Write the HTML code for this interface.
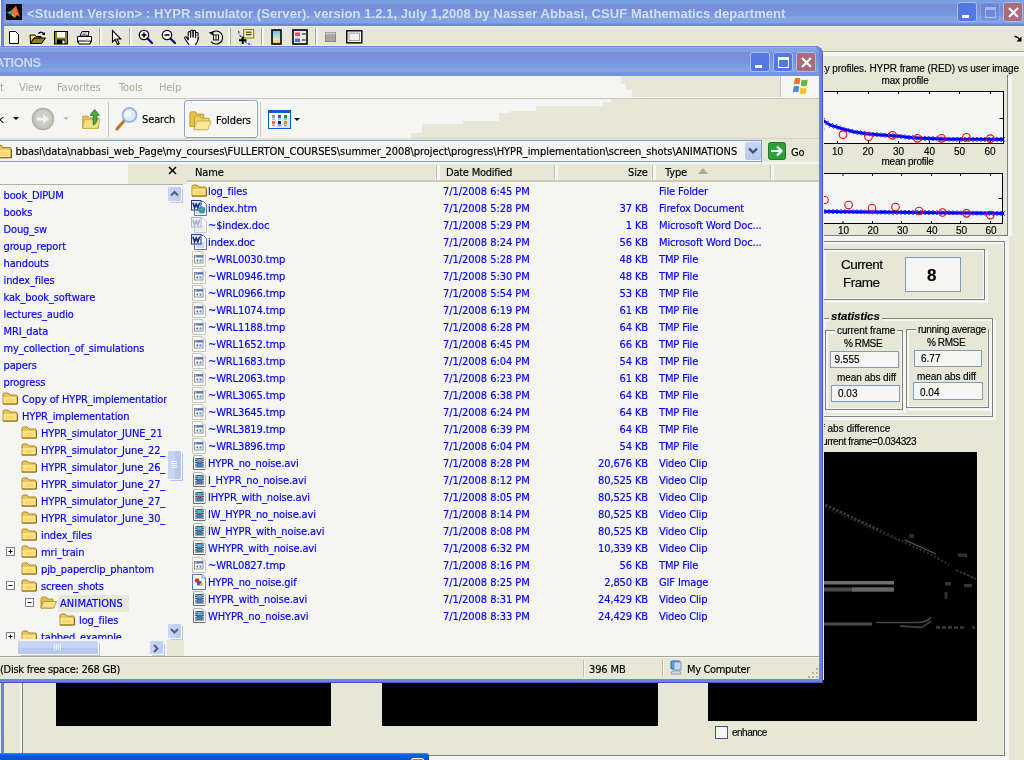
<!DOCTYPE html><html><head><meta charset="utf-8"><title>screenshot</title><style>
*{box-sizing:border-box}
html,body{margin:0;padding:0;width:1024px;height:760px;overflow:hidden;background:#E7E7D8}
body{position:relative;font-family:'DejaVu Sans Condensed','Liberation Sans',sans-serif;font-size:11px;color:#000}
#root{position:absolute;left:0;top:0;width:1024px;height:760px;overflow:hidden;will-change:transform}
.a{position:absolute}
.t{position:absolute;white-space:nowrap;line-height:14px;height:14px;letter-spacing:-0.12px}
.ar{letter-spacing:0}
.ar{font-family:'Liberation Sans',sans-serif}
svg{position:absolute;overflow:visible}
.blue{color:#0000FF}
.t{-webkit-text-stroke:0.16px currentColor}
</style></head><body><div id="root"><div class="a" style="left:0px;top:0px;width:1024px;height:26px;background:linear-gradient(#79A0E0 0,#79A0E0 3.5px,#7890DA 4px,#7890DA 11px,#7696E0 12px,#7696E0 15.5px,#82A3E2 16.5px,#82A3E2 23px,#6E86D8 24px,#6E86D8 26px)"></div>
<div class="a" style="left:4px;top:26px;width:1020px;height:1px;background:#EEEBD8"></div>
<div class="a" style="left:0px;top:0px;width:1px;height:683px;background:#F5F5F3"></div>
<div class="a" style="left:0px;top:730px;width:1px;height:30px;background:#E4ECFA"></div>
<div class="a" style="left:1px;top:0px;width:3px;height:760px;background:#7082D6"></div>
<svg style="left:6px;top:4px" width="16" height="16" viewBox="0 0 16 16"><rect width="16" height="16" fill="#0a0a0a"/><path d="M1 8.5 L5 6.5 L7.5 9.5 L5 10.5 Z" fill="#3FA7C8"/><path d="M5 6.5 L8 4 L10 1.5 L11.5 6 L14 13 L11 11 L9 14 L7.5 9.5 Z" fill="#E8742A"/><path d="M10 1.5 L11.5 6 L14 13 L12 10 Z" fill="#B8321E"/><path d="M7.5 9.5 L9 14 L6.5 12 L5 10.5Z" fill="#F2B340"/></svg>
<div class="t " style="left:27px;top:6px;font:bold 13px/16px 'Liberation Sans',sans-serif;height:16px;color:#D4DFF6;letter-spacing:0.065px;-webkit-text-stroke:0">&lt;Student Version&gt; : HYPR simulator (Server). version 1.2.1, July 1,2008 by Nasser Abbasi, CSUF Mathematics department</div>
<div class="a" style="left:957px;top:2px;width:20px;height:20px;background:#5378E0;border:1px solid #A9BDEE;border-radius:3px"><div class="a" style="left:4px;top:12px;width:7px;height:3px;background:#fff"></div></div>
<div class="a" style="left:980px;top:2px;width:20px;height:20px;opacity:.35;background:#5378E0;border:1px solid #A9BDEE;border-radius:3px"><div class="a" style="left:4px;top:4px;width:11px;height:11px;border:1px solid #fff;border-top:3px solid #fff"></div></div>
<div class="a" style="left:1003px;top:2px;width:20px;height:20px;background:#AD6A7A;border:1px solid #A9BDEE;border-radius:3px"><svg style="left:0;top:0" width="19" height="19" viewBox="0 0 19 19"><path d="M5 5 L14 14 M14 5 L5 14" stroke="#fff" stroke-width="2.2" /></svg></div>
<div class="a" style="left:4px;top:27px;width:1020px;height:19px;background:#E7E7D8"></div>
<svg style="left:8px;top:30px" width="12" height="15" viewBox="0 0 12 15"><path d="M1.5 1.5 H7.5 L10.5 4.5 V13.5 H1.5 Z" fill="#fff" stroke="#000" stroke-width="1"/></svg>
<svg style="left:29px;top:30px" width="18" height="14" viewBox="0 0 18 14"><path d="M9 3 q3 -3 6 0 l1 -1 v3 h-3 l1 -1 q-2 -2 -4 0z" fill="#000"/><path d="M1 5 H6 L7 6.5 H12 V8 H5 L1.5 13 Z" fill="#F4E04A" stroke="#000" stroke-width="1"/><path d="M5 8 H16.5 L12.5 13.5 H1.5 Z" fill="#8A8418" stroke="#000" stroke-width="1"/></svg>
<svg style="left:54px;top:31px" width="14" height="14" viewBox="0 0 14 14"><rect x="0.5" y="0.5" width="13" height="12.5" fill="#8A8418" stroke="#000"/><rect x="3" y="1" width="8" height="5.5" fill="#fff"/><rect x="3" y="8.5" width="8" height="4.5" fill="#000"/><rect x="8.5" y="9.5" width="2" height="3" fill="#fff"/></svg>
<svg style="left:76px;top:30px" width="17" height="15" viewBox="0 0 17 15"><path d="M4 6 L6 1.5 H13 L12 6Z" fill="#fff" stroke="#000"/><path d="M1.5 6.500 H15.5 V12 H1.5Z" fill="#fff" stroke="#000"/><path d="M2 11 H15 L14 14 H3Z" fill="#fff" stroke="#000"/><rect x="9" y="9" width="4" height="1.5" fill="#F4E04A"/><path d="M6.5 3 H11 M6 4.500 H10.5" stroke="#666" stroke-width=".8"/></svg>
<div class="a" style="left:99px;top:28px;width:1px;height:18px;background:#A8A898"></div>
<div class="a" style="left:100px;top:28px;width:2px;height:18px;background:#F5F5F3"></div>
<div class="a" style="left:129px;top:28px;width:1px;height:18px;background:#A8A898"></div>
<div class="a" style="left:130px;top:28px;width:2px;height:18px;background:#F5F5F3"></div>
<svg style="left:111px;top:30px" width="10" height="16" viewBox="0 0 10 16"><path d="M1.5 0.500 V12 L4.200 9.500 L6.500 14.500 L8.200 13.700 L6 9 H9.800 Z" fill="#fff" stroke="#000" stroke-width="1.1"/></svg>
<svg style="left:138px;top:29px" width="16" height="16" viewBox="0 0 16 16"><circle cx="6" cy="6" r="4.700" fill="#fff" stroke="#000" stroke-width="1.3"/><path d="M3.500 6 H8.500" stroke="#000" stroke-width="1.6"/><path d="M6 3.500 V8.500" stroke="#000" stroke-width="1.6"/><path d="M9.500 9.500 L14 14" stroke="#10108C" stroke-width="2.400" stroke-linecap="round"/></svg>
<svg style="left:161px;top:29px" width="16" height="16" viewBox="0 0 16 16"><circle cx="6" cy="6" r="4.700" fill="#fff" stroke="#000" stroke-width="1.3"/><path d="M3.500 6 H8.500" stroke="#000" stroke-width="1.6"/><path d="M9.500 9.500 L14 14" stroke="#10108C" stroke-width="2.400" stroke-linecap="round"/></svg>
<svg style="left:184px;top:29px" width="17" height="17" viewBox="0 0 17 17"><g fill="#fff" stroke="#000" stroke-width="1.100"><rect x="4.200" y="2.500" width="2.300" height="8" rx="1.100"/><rect x="6.700" y="1" width="2.300" height="9" rx="1.100"/><rect x="9.200" y="1.300" width="2.300" height="9" rx="1.100"/><rect x="11.700" y="3.300" width="2.300" height="8" rx="1.100"/></g><path d="M4.200 7.500 V11.300 L2.700 8.500 Q1.700 7.300 0.900 8.200 Q0.400 9 1.200 10.200 L5.300 16.200 H11.200 Q14 12.500 14 10.300 V7.500Z" fill="#fff"/><path d="M4.200 8 V11.300 L2.700 8.500 Q1.700 7.300 0.900 8.200 Q0.400 9 1.200 10.200 L5.300 16.200 M11.200 16.200 Q14 12.500 14 10.300 V8" fill="none" stroke="#000" stroke-width="1.100"/><path d="M6.600 7 V9 M9.100 7 V9 M11.600 7 V9" stroke="#000" stroke-width=".9"/></svg>
<svg style="left:208px;top:29px" width="17" height="17" viewBox="0 0 17 17"><path d="M3.500 4 A6.500 6.500 0 1 1 3 12.500" fill="none" stroke="#000" stroke-width="1.100"/><path d="M1 3 H5.500 V7.500 Z" fill="#000" transform="rotate(-10 3 5)"/><rect x="5.500" y="6" width="5" height="5" fill="#fff" stroke="#000" stroke-width=".9"/><path d="M8 6 V11" stroke="#000" stroke-width=".9"/></svg>
<div class="a" style="left:230px;top:28px;width:1px;height:18px;background:#A8A898"></div>
<div class="a" style="left:228px;top:28px;width:2px;height:18px;background:#F5F5F3"></div>
<svg style="left:238px;top:28px" width="18" height="18" viewBox="0 0 18 18"><path d="M0.500 3 Q3 14 14 17" fill="none" stroke="#2020E0" stroke-width="1.100" stroke-dasharray="2.500 1.500"/><rect x="5.700" y="1.500" width="10" height="8.500" fill="#F4EEB8" stroke="#8A8418" stroke-width="1.100"/><path d="M8 4.200 H13.500 M8 6.700 H13.500" stroke="#000" stroke-width=".9"/><path d="M1 12.300 H8.500 M4.700 8.500 V16" stroke="#000" stroke-width="2"/></svg>
<div class="a" style="left:261px;top:28px;width:1px;height:18px;background:#A8A898"></div>
<div class="a" style="left:262px;top:28px;width:2px;height:18px;background:#F5F5F3"></div>
<svg style="left:271px;top:29px" width="11" height="17" viewBox="0 0 11 17"><defs><linearGradient id="cb" x1="0" y1="0" x2="0" y2="1"><stop offset="0" stop-color="#7FB4F0"/><stop offset=".45" stop-color="#A8E0E0"/><stop offset=".7" stop-color="#F2E6A0"/><stop offset="1" stop-color="#F0B080"/></linearGradient></defs><rect x="1" y="1" width="9" height="14" fill="url(#cb)" stroke="#000" stroke-width="1.600"/></svg>
<svg style="left:292px;top:29px" width="16" height="16" viewBox="0 0 16 16"><rect x="1" y="1" width="14" height="14" fill="#E8E8E0" stroke="#000" stroke-width="1.600"/><rect x="3" y="3.500" width="5" height="3.500" fill="#E05060"/><rect x="3" y="9.500" width="5" height="3.500" fill="#5070E0"/><path d="M10 5 H13.500 M10 11 H13.500" stroke="#000" stroke-width="1.200"/></svg>
<div class="a" style="left:315px;top:28px;width:1px;height:18px;background:#A8A898"></div>
<div class="a" style="left:316px;top:28px;width:2px;height:18px;background:#F5F5F3"></div>
<svg style="left:325px;top:32px" width="12" height="11" viewBox="0 0 12 11"><rect x="0.500" y="0.500" width="10" height="9" fill="#A8A8A0" stroke="#888880"/><rect x="0.500" y="0.500" width="10" height="2" fill="#C8C8C0"/></svg>
<svg style="left:346px;top:30px" width="17" height="14" viewBox="0 0 17 14"><rect x="0.800" y="0.800" width="15" height="12" fill="#fff" stroke="#000" stroke-width="1.400"/><rect x="3" y="3" width="10.500" height="7.500" fill="#F0F0EC" stroke="#888" stroke-width=".8"/></svg>
<svg style="left:1014px;top:35px" width="8" height="7" viewBox="0 0 8 7"><path d="M0.500 1.500 Q3 1 6.500 5.500" stroke="#000" stroke-width="1.400" fill="none"/><path d="M7.500 1.500 V6.500 H2.500 Z" fill="#000"/></svg>
<div class="a" style="left:20px;top:683px;width:2px;height:72px;background:#F5F5F3"></div>
<div class="a" style="left:22px;top:683px;width:1px;height:72px;background:#808080"></div>
<div class="a" style="left:4px;top:51px;width:1020px;height:1px;background:#A8A890"></div>
<div class="a" style="left:4px;top:52px;width:1020px;height:4px;background:#F5F5F3"></div>
<div class="a" style="left:1007px;top:75px;width:1px;height:161px;background:#808080"></div>
<div class="a" style="left:1008px;top:76px;width:4px;height:160px;background:#F5F5F3"></div>
<div class="a" style="left:822px;top:235px;width:186px;height:1px;background:#808080"></div>
<div class="a" style="left:822px;top:236px;width:186px;height:5px;background:#F5F5F3"></div>
<div class="a" style="left:1005px;top:236px;width:4px;height:524px;background:#F5F5F3"></div>
<div class="a" style="left:822px;top:241px;width:183px;height:1px;background:#808080"></div>
<div class="a" style="left:822px;top:242px;width:181px;height:2px;background:#F5F5F3"></div>
<div class="a" style="left:1003px;top:242px;width:1px;height:513px;background:#F5F5F3"></div>
<div class="a" style="left:1004px;top:242px;width:1px;height:514px;background:#808080"></div>
<div class="a" style="left:429px;top:755px;width:576px;height:1px;background:#808080"></div>
<div class="a" style="left:429px;top:756px;width:580px;height:4px;background:#F5F5F3"></div>
<div class="a" style="left:56px;top:683px;width:275px;height:43px;background:#000"></div>
<div class="a" style="left:382px;top:683px;width:276px;height:43px;background:#000"></div>
<div class="a" style="left:708px;top:452px;width:269px;height:269px;background:#000"></div>
<div class="a" style="left:715px;top:726px;width:13px;height:13px;background:#F5F5F3;border:1px solid #3C5A8C"></div>
<div class="t ar" style="left:732px;top:726px;font-size:10px;letter-spacing:-0.5px">enhance</div>
<svg style="left:0;top:0" width="1024" height="760" viewBox="0 0 1024 760"><path d="M800 493 L880 530.600" stroke="#3A3A3A" stroke-width="2.600" stroke-dasharray="2.500 1.500" fill="none"/><path d="M880 530.600 L936 557 L949 565" stroke="#2C2C2C" stroke-width="2.400" stroke-dasharray="2 2" fill="none"/><path d="M806 499 L900 541" stroke="#2C2C2C" stroke-width="1.500" stroke-dasharray="1.500 2" fill="none"/><path d="M905 540 L936 554" stroke="#585858" stroke-width="1.300" fill="none"/><path d="M956 570 L976 579" stroke="#3A3A3A" stroke-width="1.600" stroke-dasharray="3 1" fill="none"/><rect x="800" y="581" width="94" height="3.500" fill="#6E6E6E"/><rect x="800" y="587.500" width="94" height="4" fill="#484848"/><rect x="852" y="587.500" width="42" height="4" fill="#666"/><rect x="800" y="622.500" width="72" height="3" fill="#4C4C4C"/><path d="M876 622.500 H918 Q928 622 931 617" stroke="#484848" stroke-width="1.500" fill="none"/><path d="M900 626 L922 627.500 L931 621" stroke="#3C3C3C" stroke-width="2" fill="none"/><path d="M936 627.500 H964" stroke="#3A3A3A" stroke-width="2.500" stroke-dasharray="4 2" fill="none"/><rect x="958" y="553.500" width="9" height="3.500" fill="#303030"/><rect x="964" y="584" width="8" height="3" fill="#383838"/><rect x="945" y="582" width="6" height="3.500" fill="#343434"/><rect x="944.500" y="592" width="3" height="7" fill="#303030"/><rect x="909" y="534" width="5" height="4" fill="#2C2C2C"/><rect x="972" y="626" width="3" height="3" fill="#303030"/></svg>
<div class="t ar" style="left:822px;top:62px;font-size:10px;letter-spacing:-0.07px">ty profiles. HYPR frame (RED) vs user image</div>
<div class="t ar" style="left:881.5px;top:74px;font-size:10px;letter-spacing:-0.17px">max profile</div>
<div class="t ar" style="left:881.5px;top:154.5px;font-size:10px;letter-spacing:-0.25px">mean profile</div>
<svg style="left:0;top:0" width="1024" height="760" viewBox="0 0 1024 760"><rect x="800" y="91.5" width="203.5" height="52" fill="#F5F5F3" stroke="#000" stroke-width="1"/><path d="M837.5 91 v3 M837.5 144 v-3" stroke="#000" stroke-width="1"/><path d="M868.5 91 v3 M868.5 144 v-3" stroke="#000" stroke-width="1"/><path d="M898.5 91 v3 M898.5 144 v-3" stroke="#000" stroke-width="1"/><path d="M929.5 91 v3 M929.5 144 v-3" stroke="#000" stroke-width="1"/><path d="M959.5 91 v3 M959.5 144 v-3" stroke="#000" stroke-width="1"/><path d="M990.5 91 v3 M990.5 144 v-3" stroke="#000" stroke-width="1"/><path d="M1003.5 118.5 h-4" stroke="#000" stroke-width="1"/><polyline points="810.0,113.32 811.0,113.85 812.0,114.38 813.0,114.91 814.0,115.45 815.0,115.98 816.0,116.51 817.0,117.04 818.0,117.57 819.0,118.10 820.0,118.64 821.0,119.17 822.0,119.70 823.0,120.36 824.0,121.03 825.0,121.69 826.0,122.35 827.0,123.01 828.0,123.67 829.0,124.34 830.0,125.00 831.0,125.31 832.0,125.62 833.0,125.92 834.0,126.23 835.0,126.54 836.0,126.85 837.0,127.15 838.0,127.46 839.0,127.77 840.0,128.08 841.0,128.38 842.0,128.69 843.0,129.00 844.0,129.26 845.0,129.53 846.0,129.79 847.0,130.05 848.0,130.32 849.0,130.58 850.0,130.85 851.0,131.11 852.0,131.37 853.0,131.64 854.0,131.90 855.0,132.04 856.0,132.19 857.0,132.33 858.0,132.47 859.0,132.61 860.0,132.76 861.0,132.90 862.0,133.04 863.0,133.19 864.0,133.33 865.0,133.47 866.0,133.61 867.0,133.76 868.0,133.90 869.0,133.98 870.0,134.06 871.0,134.15 872.0,134.23 873.0,134.31 874.0,134.39 875.0,134.47 876.0,134.55 877.0,134.64 878.0,134.72 879.0,134.80 880.0,134.87 881.0,134.94 882.0,135.01 883.0,135.08 884.0,135.15 885.0,135.22 886.0,135.29 887.0,135.36 888.0,135.43 889.0,135.50 890.0,135.57 891.0,135.64 892.0,135.71 893.0,135.78 894.0,135.85 895.0,135.92 896.0,135.99 897.0,136.06 898.0,136.13 899.0,136.20 900.0,136.32 901.0,136.44 902.0,136.57 903.0,136.69 904.0,136.81 905.0,136.93 906.0,137.06 907.0,137.18 908.0,137.30 909.0,137.38 910.0,137.45 911.0,137.53 912.0,137.60 913.0,137.68 914.0,137.75 915.0,137.82 916.0,137.90 917.0,137.97 918.0,138.05 919.0,138.12 920.0,138.20 921.0,138.23 922.0,138.27 923.0,138.30 924.0,138.34 925.0,138.37 926.0,138.41 927.0,138.44 928.0,138.48 929.0,138.51 930.0,138.54 931.0,138.58 932.0,138.61 933.0,138.65 934.0,138.68 935.0,138.72 936.0,138.75 937.0,138.79 938.0,138.82 939.0,138.86 940.0,138.89 941.0,138.92 942.0,138.96 943.0,138.99 944.0,139.03 945.0,139.06 946.0,139.10 947.0,139.13 948.0,139.17 949.0,139.20 950.0,139.20 951.0,139.21 952.0,139.21 953.0,139.21 954.0,139.22 955.0,139.22 956.0,139.23 957.0,139.23 958.0,139.23 959.0,139.24 960.0,139.24 961.0,139.24 962.0,139.25 963.0,139.25 964.0,139.25 965.0,139.26 966.0,139.26 967.0,139.27 968.0,139.27 969.0,139.27 970.0,139.28 971.0,139.28 972.0,139.28 973.0,139.29 974.0,139.29 975.0,139.29 976.0,139.30 977.0,139.30 978.0,139.31 979.0,139.31 980.0,139.31 981.0,139.32 982.0,139.32 983.0,139.32 984.0,139.33 985.0,139.33 986.0,139.33 987.0,139.34 988.0,139.34 989.0,139.35 990.0,139.35 991.0,139.35 992.0,139.36 993.0,139.36 994.0,139.36 995.0,139.37 996.0,139.37 997.0,139.37 998.0,139.38 999.0,139.38 1000.0,139.39 1001.0,139.39 1002.0,139.39 1003.0,139.40 1004.0,139.40" fill="none" stroke="#0000FF" stroke-width="2.6"/><path d="M809.5 111.6 l3 4.4 M812.5 111.6 l-3 4.4 M813.5 113.8 l3 4.4 M816.5 113.8 l-3 4.4 M817.5 115.9 l3 4.4 M820.5 115.9 l-3 4.4 M821.5 118.2 l3 4.4 M824.5 118.2 l-3 4.4 M825.5 120.8 l3 4.4 M828.5 120.8 l-3 4.4 M829.5 123.1 l3 4.4 M832.5 123.1 l-3 4.4 M833.5 124.3 l3 4.4 M836.5 124.3 l-3 4.4 M837.5 125.6 l3 4.4 M840.5 125.6 l-3 4.4 M841.5 126.8 l3 4.4 M844.5 126.8 l-3 4.4 M845.5 127.9 l3 4.4 M848.5 127.9 l-3 4.4 M849.5 128.9 l3 4.4 M852.5 128.9 l-3 4.4 M853.5 129.8 l3 4.4 M856.5 129.8 l-3 4.4 M857.5 130.4 l3 4.4 M860.5 130.4 l-3 4.4 M861.5 131.0 l3 4.4 M864.5 131.0 l-3 4.4 M865.5 131.6 l3 4.4 M868.5 131.6 l-3 4.4 M869.5 131.9 l3 4.4 M872.5 131.9 l-3 4.4 M873.5 132.3 l3 4.4 M876.5 132.3 l-3 4.4 M877.5 132.6 l3 4.4 M880.5 132.6 l-3 4.4 M881.5 132.9 l3 4.4 M884.5 132.9 l-3 4.4 M885.5 133.2 l3 4.4 M888.5 133.2 l-3 4.4 M889.5 133.4 l3 4.4 M892.5 133.4 l-3 4.4 M893.5 133.7 l3 4.4 M896.5 133.7 l-3 4.4 M897.5 134.0 l3 4.4 M900.5 134.0 l-3 4.4 M901.5 134.5 l3 4.4 M904.5 134.5 l-3 4.4 M905.5 135.0 l3 4.4 M908.5 135.0 l-3 4.4 M909.5 135.3 l3 4.4 M912.5 135.3 l-3 4.4 M913.5 135.6 l3 4.4 M916.5 135.6 l-3 4.4 M917.5 135.9 l3 4.4 M920.5 135.9 l-3 4.4 M921.5 136.1 l3 4.4 M924.5 136.1 l-3 4.4 M925.5 136.2 l3 4.4 M928.5 136.2 l-3 4.4 M929.5 136.4 l3 4.4 M932.5 136.4 l-3 4.4 M933.5 136.5 l3 4.4 M936.5 136.5 l-3 4.4 M937.5 136.7 l3 4.4 M940.5 136.7 l-3 4.4 M941.5 136.8 l3 4.4 M944.5 136.8 l-3 4.4 M945.5 136.9 l3 4.4 M948.5 136.9 l-3 4.4 M949.5 137.0 l3 4.4 M952.5 137.0 l-3 4.4 M953.5 137.0 l3 4.4 M956.5 137.0 l-3 4.4 M957.5 137.0 l3 4.4 M960.5 137.0 l-3 4.4 M961.5 137.1 l3 4.4 M964.5 137.1 l-3 4.4 M965.5 137.1 l3 4.4 M968.5 137.1 l-3 4.4 M969.5 137.1 l3 4.4 M972.5 137.1 l-3 4.4 M973.5 137.1 l3 4.4 M976.5 137.1 l-3 4.4 M977.5 137.1 l3 4.4 M980.5 137.1 l-3 4.4 M981.5 137.1 l3 4.4 M984.5 137.1 l-3 4.4 M985.5 137.1 l3 4.4 M988.5 137.1 l-3 4.4 M989.5 137.2 l3 4.4 M992.5 137.2 l-3 4.4 M993.5 137.2 l3 4.4 M996.5 137.2 l-3 4.4 M997.5 137.2 l3 4.4 M1000.5 137.2 l-3 4.4 M1001.5 137.2 l3 4.4 M1004.5 137.2 l-3 4.4 " stroke="#0000FF" stroke-width="1"/><circle cx="820" cy="129" r="3.800" fill="none" stroke="#F00000" stroke-width="1.100"/><circle cx="843" cy="134.7" r="3.800" fill="none" stroke="#F00000" stroke-width="1.100"/><circle cx="868.5" cy="136.7" r="3.800" fill="none" stroke="#F00000" stroke-width="1.100"/><circle cx="892.5" cy="135.3" r="3.800" fill="none" stroke="#F00000" stroke-width="1.100"/><circle cx="917.4" cy="138.3" r="3.800" fill="none" stroke="#F00000" stroke-width="1.100"/><circle cx="941.5" cy="138.3" r="3.800" fill="none" stroke="#F00000" stroke-width="1.100"/><circle cx="966.4" cy="137.3" r="3.800" fill="none" stroke="#F00000" stroke-width="1.100"/><circle cx="990.3" cy="138.7" r="3.800" fill="none" stroke="#F00000" stroke-width="1.100"/></svg>
<svg style="left:0;top:0" width="1024" height="760" viewBox="0 0 1024 760"><rect x="800" y="173.5" width="202.5" height="50" fill="#F5F5F3" stroke="#000" stroke-width="1"/><path d="M843 173 v3 M843 224 v-3" stroke="#000" stroke-width="1"/><path d="M872.5 173 v3 M872.5 224 v-3" stroke="#000" stroke-width="1"/><path d="M901.5 173 v3 M901.5 224 v-3" stroke="#000" stroke-width="1"/><path d="M931.5 173 v3 M931.5 224 v-3" stroke="#000" stroke-width="1"/><path d="M960.5 173 v3 M960.5 224 v-3" stroke="#000" stroke-width="1"/><path d="M990.5 173 v3 M990.5 224 v-3" stroke="#000" stroke-width="1"/><path d="M1002.5 198.5 h-4" stroke="#000" stroke-width="1"/><polyline points="822.0,211.50 823.0,211.51 824.0,211.52 825.0,211.53 826.0,211.54 827.0,211.55 828.0,211.56 829.0,211.57 830.0,211.58 831.0,211.59 832.0,211.60 833.0,211.61 834.0,211.63 835.0,211.64 836.0,211.65 837.0,211.66 838.0,211.67 839.0,211.68 840.0,211.69 841.0,211.70 842.0,211.71 843.0,211.72 844.0,211.73 845.0,211.74 846.0,211.75 847.0,211.76 848.0,211.77 849.0,211.78 850.0,211.79 851.0,211.80 852.0,211.81 853.0,211.82 854.0,211.83 855.0,211.84 856.0,211.85 857.0,211.87 858.0,211.88 859.0,211.89 860.0,211.90 861.0,211.91 862.0,211.92 863.0,211.93 864.0,211.94 865.0,211.95 866.0,211.96 867.0,211.97 868.0,211.98 869.0,211.99 870.0,212.00 871.0,212.01 872.0,212.02 873.0,212.03 874.0,212.04 875.0,212.05 876.0,212.06 877.0,212.07 878.0,212.08 879.0,212.10 880.0,212.11 881.0,212.12 882.0,212.13 883.0,212.14 884.0,212.15 885.0,212.16 886.0,212.17 887.0,212.18 888.0,212.19 889.0,212.20 890.0,212.21 891.0,212.22 892.0,212.23 893.0,212.24 894.0,212.25 895.0,212.26 896.0,212.27 897.0,212.28 898.0,212.29 899.0,212.30 900.0,212.31 901.0,212.32 902.0,212.34 903.0,212.35 904.0,212.36 905.0,212.37 906.0,212.38 907.0,212.39 908.0,212.40 909.0,212.41 910.0,212.42 911.0,212.43 912.0,212.44 913.0,212.45 914.0,212.46 915.0,212.47 916.0,212.48 917.0,212.49 918.0,212.50 919.0,212.51 920.0,212.52 921.0,212.53 922.0,212.54 923.0,212.55 924.0,212.56 925.0,212.58 926.0,212.59 927.0,212.60 928.0,212.61 929.0,212.62 930.0,212.63 931.0,212.64 932.0,212.65 933.0,212.66 934.0,212.67 935.0,212.68 936.0,212.69 937.0,212.70 938.0,212.71 939.0,212.72 940.0,212.73 941.0,212.74 942.0,212.75 943.0,212.76 944.0,212.77 945.0,212.78 946.0,212.79 947.0,212.80 948.0,212.82 949.0,212.83 950.0,212.84 951.0,212.85 952.0,212.86 953.0,212.87 954.0,212.88 955.0,212.89 956.0,212.90 957.0,212.91 958.0,212.92 959.0,212.93 960.0,212.94 961.0,212.95 962.0,212.96 963.0,212.97 964.0,212.98 965.0,212.99 966.0,213.00 967.0,213.01 968.0,213.02 969.0,213.03 970.0,213.05 971.0,213.06 972.0,213.07 973.0,213.08 974.0,213.09 975.0,213.10 976.0,213.11 977.0,213.12 978.0,213.13 979.0,213.14 980.0,213.15 981.0,213.16 982.0,213.17 983.0,213.18 984.0,213.19 985.0,213.20 986.0,213.21 987.0,213.22 988.0,213.23 989.0,213.24 990.0,213.25 991.0,213.26 992.0,213.27 993.0,213.29 994.0,213.30 995.0,213.31 996.0,213.32 997.0,213.33 998.0,213.34 999.0,213.35 1000.0,213.36 1001.0,213.37 1002.0,213.38 1003.0,213.39 1004.0,213.40" fill="none" stroke="#0000FF" stroke-width="2.6"/><path d="M821.5 209.3 l3 4.4 M824.5 209.3 l-3 4.4 M825.5 209.4 l3 4.4 M828.5 209.4 l-3 4.4 M829.5 209.4 l3 4.4 M832.5 209.4 l-3 4.4 M833.5 209.4 l3 4.4 M836.5 209.4 l-3 4.4 M837.5 209.5 l3 4.4 M840.5 209.5 l-3 4.4 M841.5 209.5 l3 4.4 M844.5 209.5 l-3 4.4 M845.5 209.6 l3 4.4 M848.5 209.6 l-3 4.4 M849.5 209.6 l3 4.4 M852.5 209.6 l-3 4.4 M853.5 209.6 l3 4.4 M856.5 209.6 l-3 4.4 M857.5 209.7 l3 4.4 M860.5 209.7 l-3 4.4 M861.5 209.7 l3 4.4 M864.5 209.7 l-3 4.4 M865.5 209.8 l3 4.4 M868.5 209.8 l-3 4.4 M869.5 209.8 l3 4.4 M872.5 209.8 l-3 4.4 M873.5 209.9 l3 4.4 M876.5 209.9 l-3 4.4 M877.5 209.9 l3 4.4 M880.5 209.9 l-3 4.4 M881.5 209.9 l3 4.4 M884.5 209.9 l-3 4.4 M885.5 210.0 l3 4.4 M888.5 210.0 l-3 4.4 M889.5 210.0 l3 4.4 M892.5 210.0 l-3 4.4 M893.5 210.1 l3 4.4 M896.5 210.1 l-3 4.4 M897.5 210.1 l3 4.4 M900.5 210.1 l-3 4.4 M901.5 210.1 l3 4.4 M904.5 210.1 l-3 4.4 M905.5 210.2 l3 4.4 M908.5 210.2 l-3 4.4 M909.5 210.2 l3 4.4 M912.5 210.2 l-3 4.4 M913.5 210.3 l3 4.4 M916.5 210.3 l-3 4.4 M917.5 210.3 l3 4.4 M920.5 210.3 l-3 4.4 M921.5 210.4 l3 4.4 M924.5 210.4 l-3 4.4 M925.5 210.4 l3 4.4 M928.5 210.4 l-3 4.4 M929.5 210.4 l3 4.4 M932.5 210.4 l-3 4.4 M933.5 210.5 l3 4.4 M936.5 210.5 l-3 4.4 M937.5 210.5 l3 4.4 M940.5 210.5 l-3 4.4 M941.5 210.6 l3 4.4 M944.5 210.6 l-3 4.4 M945.5 210.6 l3 4.4 M948.5 210.6 l-3 4.4 M949.5 210.6 l3 4.4 M952.5 210.6 l-3 4.4 M953.5 210.7 l3 4.4 M956.5 210.7 l-3 4.4 M957.5 210.7 l3 4.4 M960.5 210.7 l-3 4.4 M961.5 210.8 l3 4.4 M964.5 210.8 l-3 4.4 M965.5 210.8 l3 4.4 M968.5 210.8 l-3 4.4 M969.5 210.9 l3 4.4 M972.5 210.9 l-3 4.4 M973.5 210.9 l3 4.4 M976.5 210.9 l-3 4.4 M977.5 210.9 l3 4.4 M980.5 210.9 l-3 4.4 M981.5 211.0 l3 4.4 M984.5 211.0 l-3 4.4 M985.5 211.0 l3 4.4 M988.5 211.0 l-3 4.4 M989.5 211.1 l3 4.4 M992.5 211.1 l-3 4.4 M993.5 211.1 l3 4.4 M996.5 211.1 l-3 4.4 M997.5 211.1 l3 4.4 M1000.5 211.1 l-3 4.4 M1001.5 211.2 l3 4.4 M1004.5 211.2 l-3 4.4 " stroke="#0000FF" stroke-width="1"/><circle cx="824.5" cy="200" r="3.800" fill="none" stroke="#F00000" stroke-width="1.100"/><circle cx="848.6" cy="205" r="3.800" fill="none" stroke="#F00000" stroke-width="1.100"/><circle cx="872" cy="208" r="3.800" fill="none" stroke="#F00000" stroke-width="1.100"/><circle cx="895.5" cy="207" r="3.800" fill="none" stroke="#F00000" stroke-width="1.100"/><circle cx="919" cy="211" r="3.800" fill="none" stroke="#F00000" stroke-width="1.100"/><circle cx="942.5" cy="212.5" r="3.800" fill="none" stroke="#F00000" stroke-width="1.100"/><circle cx="966.5" cy="213.3" r="3.800" fill="none" stroke="#F00000" stroke-width="1.100"/><circle cx="990.3" cy="215.1" r="3.800" fill="none" stroke="#F00000" stroke-width="1.100"/></svg>
<div class="t ar" style="left:832px;top:144.5px;font-size:10px">10</div>
<div class="t ar" style="left:838px;top:224px;font-size:10px">10</div>
<div class="t ar" style="left:862.5px;top:144.5px;font-size:10px">20</div>
<div class="t ar" style="left:867.5px;top:224px;font-size:10px">20</div>
<div class="t ar" style="left:893px;top:144.5px;font-size:10px">30</div>
<div class="t ar" style="left:897px;top:224px;font-size:10px">30</div>
<div class="t ar" style="left:924px;top:144.5px;font-size:10px">40</div>
<div class="t ar" style="left:926.5px;top:224px;font-size:10px">40</div>
<div class="t ar" style="left:954px;top:144.5px;font-size:10px">50</div>
<div class="t ar" style="left:956px;top:224px;font-size:10px">50</div>
<div class="t ar" style="left:984.5px;top:144.5px;font-size:10px">60</div>
<div class="t ar" style="left:985.5px;top:224px;font-size:10px">60</div>
<div class="a" style="left:823px;top:249px;width:162px;height:51px;border:1px solid #808080;box-shadow:1px 1px 0 #F5F5F3, 2px 2px 0 #F5F5F3, 3px 3px 0 #F5F5F3, inset 2px 2px 0 #F5F5F3, inset -1px -1px 0 #F5F5F3"></div>
<div class="t ar" style="left:841px;top:257px;font-size:13.5px;line-height:16px;height:16px;letter-spacing:-0.5px">Current</div>
<div class="t ar" style="left:843px;top:274.5px;font-size:13.5px;line-height:16px;height:16px;letter-spacing:-0.5px">Frame</div>
<div class="a" style="left:905px;top:257px;width:56px;height:35px;background:#F5F5F3;border:1px solid #7F9DB9"></div>
<div class="t " style="left:927px;top:267px;font:bold 17px/18px 'Liberation Sans',sans-serif;height:18px">8</div>
<div class="a" style="left:823px;top:318px;width:170px;height:99px;border:1px solid #808080;box-shadow:1px 1px 0 #F5F5F3, 2px 2px 0 #F5F5F3, 3px 3px 0 #F5F5F3, inset 2px 2px 0 #F5F5F3, inset -1px -1px 0 #F5F5F3"></div>
<div class="a" style="left:829px;top:308px;width:53px;height:16px;background:#E7E7D8"></div>
<div class="t " style="left:831px;top:309px;font:italic bold 11.5px/14px 'Liberation Sans',sans-serif">statistics</div>
<div class="a" style="left:825px;top:330px;width:78px;height:80px;border:1px solid #808080;box-shadow:1px 1px 0 #F5F5F3, 2px 2px 0 #F5F5F3, 3px 3px 0 #F5F5F3, inset 2px 2px 0 #F5F5F3, inset -1px -1px 0 #F5F5F3"></div>
<div class="a" style="left:835px;top:323px;width:62px;height:13px;background:#E7E7D8"></div>
<div class="t ar" style="left:837px;top:323.5px;font-size:10px;letter-spacing:-0.1px">current frame</div>
<div class="t ar" style="left:844px;top:337.3px;font-size:10px;letter-spacing:-0.4px">% RMSE</div>
<div class="a" style="left:830px;top:351px;width:69px;height:17px;background:#F5F5F3;border:1px solid #7F9DB9"></div>
<div class="t ar" style="left:834.5px;top:353px;font-size:10px">9.555</div>
<div class="t ar" style="left:837px;top:371px;font-size:10px;letter-spacing:-0.07px">mean abs diff</div>
<div class="a" style="left:831px;top:385px;width:69px;height:17px;background:#F5F5F3;border:1px solid #7F9DB9"></div>
<div class="t ar" style="left:838px;top:387px;font-size:10px">0.03</div>
<div class="a" style="left:906px;top:329px;width:83px;height:79px;border:1px solid #808080;box-shadow:1px 1px 0 #F5F5F3, 2px 2px 0 #F5F5F3, 3px 3px 0 #F5F5F3, inset 2px 2px 0 #F5F5F3, inset -1px -1px 0 #F5F5F3"></div>
<div class="a" style="left:916px;top:322px;width:72px;height:13px;background:#E7E7D8"></div>
<div class="t ar" style="left:918px;top:322.5px;font-size:10px;letter-spacing:-0.29px">running average</div>
<div class="t ar" style="left:927px;top:335.5px;font-size:10px;letter-spacing:-0.4px">% RMSE</div>
<div class="a" style="left:914px;top:350px;width:68px;height:17px;background:#F5F5F3;border:1px solid #7F9DB9"></div>
<div class="t ar" style="left:921px;top:352px;font-size:10px">6.77</div>
<div class="t ar" style="left:917px;top:370px;font-size:10px;letter-spacing:-0.07px">mean abs diff</div>
<div class="a" style="left:913px;top:382px;width:70px;height:18px;background:#F5F5F3;border:1px solid #7F9DB9"></div>
<div class="t ar" style="left:920px;top:385.5px;font-size:10px">0.04</div>
<div class="t ar" style="left:822px;top:422px;font-size:10px">f abs difference</div>
<div class="t ar" style="left:822px;top:434.5px;font-size:10px;letter-spacing:-0.37px">urrent frame=0.034323</div>
<div class="a" style="left:4px;top:45px;width:812px;height:1px;background:#F2F0DC"></div>
<div class="a" style="left:823px;top:56px;width:1px;height:624px;background:#F0EEDA"></div>
<div class="a" style="left:-10px;top:46px;width:833px;height:637px;background:#4854C2;border-top-right-radius:8px"></div>
<div class="a" style="left:-10px;top:46px;width:832px;height:636px;background:#6C82DC;border-top-right-radius:7px"></div>
<div class="a" style="left:-10px;top:46px;width:829px;height:30px;border-top-right-radius:7px;background:linear-gradient(#6A84E0 0,#6A84E0 1px,#9CB4E8 1px,#9CB4E8 2px,#82A3E2 2.5px,#82A3E2 6px,#7890DA 6.5px,#7890DA 14px,#7696E0 14.5px,#7696E0 18px,#78A0E0 18.5px,#78A0E0 22px,#82A3E2 22.5px,#82A3E2 26px,#7694E0 26.5px,#7694E0 30px)"></div>
<div class="t " style="left:-5px;top:54.5px;font:bold 13px/16px 'Liberation Sans',sans-serif;height:16px;color:#CBD8F4;letter-spacing:-0.4px;-webkit-text-stroke:0">ATIONS</div>
<div class="a" style="left:750px;top:52px;width:20px;height:20px;background:#5378E0;border:1px solid #A9BDEE;border-radius:3px"><div class="a" style="left:4px;top:12px;width:7px;height:3px;background:#fff"></div></div>
<div class="a" style="left:773px;top:52px;width:20px;height:20px;background:#5378E0;border:1px solid #A9BDEE;border-radius:3px"><div class="a" style="left:4px;top:4px;width:11px;height:11px;border:1px solid #fff;border-top:3px solid #fff"></div></div>
<div class="a" style="left:796px;top:52px;width:20px;height:20px;background:#AD6A7A;border:1px solid #A9BDEE;border-radius:3px"><svg style="left:0;top:0" width="19" height="19" viewBox="0 0 19 19"><path d="M5 5 L14 14 M14 5 L5 14" stroke="#fff" stroke-width="2.2" /></svg></div>
<div class="a" style="left:0px;top:76px;width:819px;height:22px;background:#F5F5F3"></div>
<svg style="left:0;top:0" width="1024" height="760" viewBox="0 0 1024 760"><path d="M621 76 H819 V97 H632 V90 H626 V84 H621Z" fill="#E7E7D8"/></svg>
<div class="a" style="left:780px;top:76px;width:39px;height:21px;background:#F5F5F3;border-left:1px solid #CDC6B2"></div>
<div class="a" style="left:0px;top:97px;width:780px;height:1px;background:#F5F5F3"></div>
<div class="a" style="left:0px;top:98px;width:819px;height:1px;background:#CDC6B2"></div>
<div class="t " style="left:0px;top:81px;color:#ACA899;-webkit-text-stroke:0">t</div>
<div class="t " style="left:19px;top:81px;color:#ACA899;-webkit-text-stroke:0">View</div>
<div class="t " style="left:57px;top:81px;color:#ACA899;-webkit-text-stroke:0">Favorites</div>
<div class="t " style="left:119px;top:81px;color:#ACA899;-webkit-text-stroke:0">Tools</div>
<div class="t " style="left:159px;top:81px;color:#ACA899;-webkit-text-stroke:0">Help</div>
<svg style="left:790px;top:77px" width="20" height="19" viewBox="0 0 20 19"><g transform="skewX(-8)"><path d="M5 1.500 q3 -1.500 5.500 0 v6 q-2.500 -1.500 -5.500 0z" fill="#F26A2E"/><path d="M12 2.500 q3 1.500 6 0 v6 q-3 1.500 -6 0z" fill="#6CB33E"/><path d="M5 9.500 q3 -1.500 5.500 0 v6 q-2.500 -1.500 -5.500 0z" fill="#3F8FE0"/><path d="M12 10.500 q3 1.500 6 0 v6 q-3 1.500 -6 0z" fill="#F4C21E"/></g></svg>
<div class="a" style="left:0px;top:99px;width:819px;height:40px;background:#F5F5F3"></div>
<svg style="left:0;top:0" width="1024" height="760" viewBox="0 0 1024 760"><path d="M411 139 V133 H422 V124 H463 V121 H499 V113 H510 V111 H536 V106 H603 V102 H611 V99 H819 V139Z" fill="#E7E7D8"/></svg>
<div class="a" style="left:0px;top:138px;width:819px;height:1px;background:#CDC6B2;opacity:.6"></div>
<div class="t " style="left:-2px;top:113px;">k</div>
<svg style="left:13px;top:117px" width="6" height="3"><path d="M0 0 H6 L3 3Z" fill="#000"/></svg>
<svg style="left:31px;top:107px" width="24" height="24" viewBox="0 0 24 24"><circle cx="12" cy="12" r="10.500" fill="#C4C5BC" stroke="#AEB0A6" stroke-width="1.500"/><circle cx="12" cy="11" r="8" fill="#CDCEC6"/><path d="M6 10.500 H12 V7 L18 12 L12 17 V13.500 H6Z" fill="#F2F2EE"/></svg>
<svg style="left:63px;top:117px" width="6" height="3"><path d="M0 0 H6 L3 3Z" fill="#C0C0B4"/></svg>
<svg style="left:81px;top:107px" width="21" height="23.500" viewBox="0 0 24 26"><path d="M2 10 H8 L10 12 H20 V24 H2Z" fill="#E8C24E" stroke="#C09A30" stroke-width="1"/><path d="M4 14 H22 L19 24 H2Z" fill="#F7DF86" stroke="#C8A23A" stroke-width=".8"/><path d="M14 20 V9 H10.500 L15.500 2.500 L21 9 H18 V16 Q17 19 14 20Z" fill="#45B045" stroke="#1E7A1E" stroke-width="1"/></svg>
<div class="a" style="left:108px;top:102px;width:1px;height:35px;background:#CDC6B2"></div>
<svg style="left:114px;top:105px" width="26" height="28" viewBox="0 0 26 28"><path d="M10 16 L3 24" stroke="#C07830" stroke-width="3.200" stroke-linecap="round"/><circle cx="15.500" cy="10" r="7" fill="#DCEBFA" stroke="#9DB4D8" stroke-width="1.800"/><circle cx="14" cy="8.500" r="3" fill="#fff" opacity=".8"/></svg>
<div class="t " style="left:142px;top:113px;">Search</div>
<div class="a" style="left:184px;top:100px;width:74px;height:38px;background:#F5F5F3;border:1px solid #8CA0C8;border-radius:3px;box-shadow:inset 0 0 0 1px #fff"></div>
<svg style="left:188px;top:108.500px" width="24" height="24" viewBox="0 0 26 26"><path d="M2 5 Q2 3 4 3 H8 L10 5.500 H17 V19 H2Z" fill="#E8C24E" stroke="#C09A30"/><path d="M7 9 Q7 7.500 9 7.500 H13 L15 10 H23 V11 L20 22 H7Z" fill="#EFCF68" stroke="#C09A30"/><path d="M9.500 13 H25 L21.500 22.500 H6.500Z" fill="#FBE89A" stroke="#C8A23A" stroke-width=".8"/></svg>
<div class="t " style="left:216px;top:113.5px;">Folders</div>
<div class="a" style="left:260px;top:102px;width:1px;height:35px;background:#CDC6B2"></div>
<svg style="left:268px;top:110px" width="23" height="19" viewBox="0 0 23 19"><rect x="0.500" y="0.500" width="22" height="18" fill="#fff" stroke="#0A5AD8" stroke-width="1"/><rect x="0" y="0" width="23" height="3" fill="#0A5AD8"/><path d="M8 13 H22 V18 H8Z M14 8 H22 V13 H14Z" fill="#C8DCF8" opacity=".7"/><rect x="4" y="5" width="3" height="3.300" fill="#9090D0"/><rect x="10" y="5" width="3" height="3.300" fill="#1060E8"/><rect x="16" y="5" width="3" height="3.300" fill="#18981C"/><rect x="4" y="11" width="3" height="3.300" fill="#F06838"/><rect x="10" y="11" width="3" height="3.300" fill="#0A2A88"/><rect x="16" y="11" width="3" height="3.300" fill="#D09810"/><path d="M4 9.500 h3 M10 9.500 h3 M16 9.500 h3" stroke="#A8B0C8" stroke-width=".9"/><path d="M4 15.700 h3 M10 15.700 h3 M16 15.700 h3" stroke="#808080" stroke-width=".9"/></svg>
<svg style="left:294px;top:118px" width="6" height="3"><path d="M0 0 H6 L3 3Z" fill="#000"/></svg>
<div class="a" style="left:0px;top:139px;width:819px;height:25px;background:#E7E7D8"></div>
<div class="a" style="left:0px;top:162px;width:819px;height:2px;background:#F5F5F3"></div>
<div class="a" style="left:-5px;top:140px;width:767px;height:22px;background:#F5F5F3;border:1px solid #7F9DB9"></div>
<svg style="left:-6px;top:143px" width="18" height="16" viewBox="0 0 16 14"><path d="M1 3.500 Q1 2 2.500 2 H6 L8 4 H14 Q15 4 15 5 V13 H1Z" fill="#E9C55A" stroke="#B08424" stroke-width="1"/><path d="M1.500 6 H14.500 V12.500 H1.500Z" fill="#FBE48E"/><path d="M4 8 H12 V11 H4Z" fill="#F7D768"/><path d="M1 13 H15.500 V5.500" stroke="#8C6A1C" stroke-width="1" fill="none"/></svg>
<div class="t " style="left:15.5px;top:145px;letter-spacing:-0.05px">bbasi\data\nabbasi_web_Page\my_courses\FULLERTON_COURSES\summer_2008\project\progress\HYPR_implementation\screen_shots\ANIMATIONS</div>
<div class="a" style="left:745px;top:142px;width:16px;height:18px;background:linear-gradient(#C6D6F4,#B4C8F0);border-radius:2px"></div>
<svg style="left:748px;top:147px" width="10" height="8" viewBox="0 0 10 8"><path d="M1 1.500 L5 5.500 L9 1.500" fill="none" stroke="#3C4C80" stroke-width="2.200"/></svg>
<svg style="left:768px;top:142px" width="18" height="18" viewBox="0 0 18 18"><rect x="0.500" y="0.500" width="17" height="17" rx="2" fill="#2EA03C" stroke="#1C7A28"/><path d="M3 9 H13 M9 4.500 L13.500 9 L9 13.500" fill="none" stroke="#fff" stroke-width="2.200"/></svg>
<div class="t " style="left:791px;top:145.5px;">Go</div>
<div class="a" style="left:0px;top:164px;width:819px;height:493px;background:#F5F5F3"></div>
<div class="a" style="left:0px;top:164px;width:128px;height:20px;background:#F5F5F3"></div>
<div class="a" style="left:128px;top:164px;width:60px;height:20px;background:#E7E7D8"></div>
<div class="a" style="left:0px;top:184px;width:183px;height:1px;background:#B4B0A0"></div>
<svg style="left:168px;top:166px" width="9" height="9" viewBox="0 0 9 9"><path d="M1 1 L8 8 M8 1 L1 8" stroke="#000" stroke-width="1.500"/></svg>
<div class="a" style="left:0;top:185px;width:167px;height:454px;overflow:hidden">
<div class="t blue" style="left:3.5px;top:4px;letter-spacing:-0.12px">book_DIPUM</div>
<div class="t blue" style="left:3.5px;top:21px;letter-spacing:-0.12px">books</div>
<div class="t blue" style="left:3.5px;top:38px;letter-spacing:-0.12px">Doug_sw</div>
<div class="t blue" style="left:3.5px;top:55px;letter-spacing:-0.12px">group_report</div>
<div class="t blue" style="left:3.5px;top:72px;letter-spacing:-0.12px">handouts</div>
<div class="t blue" style="left:3.5px;top:89px;letter-spacing:-0.12px">index_files</div>
<div class="t blue" style="left:3.5px;top:106px;letter-spacing:-0.12px">kak_book_software</div>
<div class="t blue" style="left:3.5px;top:123px;letter-spacing:-0.12px">lectures_audio</div>
<div class="t blue" style="left:3.5px;top:140px;letter-spacing:-0.12px">MRI_data</div>
<div class="t blue" style="left:3.5px;top:157px;letter-spacing:-0.12px">my_collection_of_simulations</div>
<div class="t blue" style="left:3.5px;top:174px;letter-spacing:-0.12px">papers</div>
<div class="t blue" style="left:3.5px;top:191px;letter-spacing:-0.12px">progress</div>
<svg style="left:2px;top:206px" width="16" height="14" viewBox="0 0 16 14"><path d="M1 3.500 Q1 2 2.500 2 H6 L8 4 H14 Q15 4 15 5 V13 H1Z" fill="#E9C55A" stroke="#B08424" stroke-width="1"/><path d="M1.500 6 H14.500 V12.500 H1.500Z" fill="#FBE48E"/><path d="M4 8 H12 V11 H4Z" fill="#F7D768"/><path d="M1 13 H15.500 V5.500" stroke="#8C6A1C" stroke-width="1" fill="none"/></svg>
<div class="t blue" style="left:22px;top:208px;letter-spacing:-0.12px">Copy of HYPR_implementatior</div>
<svg style="left:2px;top:223px" width="16" height="14" viewBox="0 0 16 14"><path d="M1 3.500 Q1 2 2.500 2 H6 L8 4 H14 Q15 4 15 5 V13 H1Z" fill="#E9C55A" stroke="#B08424" stroke-width="1"/><path d="M1.500 6 H14.500 V12.500 H1.500Z" fill="#FBE48E"/><path d="M4 8 H12 V11 H4Z" fill="#F7D768"/><path d="M1 13 H15.500 V5.500" stroke="#8C6A1C" stroke-width="1" fill="none"/></svg>
<div class="t blue" style="left:22px;top:225px;letter-spacing:-0.12px">HYPR_implementation</div>
<svg style="left:21px;top:240px" width="16" height="14" viewBox="0 0 16 14"><path d="M1 3.500 Q1 2 2.500 2 H6 L8 4 H14 Q15 4 15 5 V13 H1Z" fill="#E9C55A" stroke="#B08424" stroke-width="1"/><path d="M1.500 6 H14.500 V12.500 H1.500Z" fill="#FBE48E"/><path d="M4 8 H12 V11 H4Z" fill="#F7D768"/><path d="M1 13 H15.500 V5.500" stroke="#8C6A1C" stroke-width="1" fill="none"/></svg>
<div class="t blue" style="left:41px;top:242px;letter-spacing:-0.12px">HYPR_simulator_JUNE_21</div>
<svg style="left:21px;top:257px" width="16" height="14" viewBox="0 0 16 14"><path d="M1 3.500 Q1 2 2.500 2 H6 L8 4 H14 Q15 4 15 5 V13 H1Z" fill="#E9C55A" stroke="#B08424" stroke-width="1"/><path d="M1.500 6 H14.500 V12.500 H1.500Z" fill="#FBE48E"/><path d="M4 8 H12 V11 H4Z" fill="#F7D768"/><path d="M1 13 H15.500 V5.500" stroke="#8C6A1C" stroke-width="1" fill="none"/></svg>
<div class="t blue" style="left:41px;top:259px;letter-spacing:-0.12px">HYPR_simulator_June_22_</div>
<svg style="left:21px;top:274px" width="16" height="14" viewBox="0 0 16 14"><path d="M1 3.500 Q1 2 2.500 2 H6 L8 4 H14 Q15 4 15 5 V13 H1Z" fill="#E9C55A" stroke="#B08424" stroke-width="1"/><path d="M1.500 6 H14.500 V12.500 H1.500Z" fill="#FBE48E"/><path d="M4 8 H12 V11 H4Z" fill="#F7D768"/><path d="M1 13 H15.500 V5.500" stroke="#8C6A1C" stroke-width="1" fill="none"/></svg>
<div class="t blue" style="left:41px;top:276px;letter-spacing:-0.12px">HYPR_simulator_June_26_</div>
<svg style="left:21px;top:291px" width="16" height="14" viewBox="0 0 16 14"><path d="M1 3.500 Q1 2 2.500 2 H6 L8 4 H14 Q15 4 15 5 V13 H1Z" fill="#E9C55A" stroke="#B08424" stroke-width="1"/><path d="M1.500 6 H14.500 V12.500 H1.500Z" fill="#FBE48E"/><path d="M4 8 H12 V11 H4Z" fill="#F7D768"/><path d="M1 13 H15.500 V5.500" stroke="#8C6A1C" stroke-width="1" fill="none"/></svg>
<div class="t blue" style="left:41px;top:293px;letter-spacing:-0.12px">HYPR_simulator_June_27_</div>
<svg style="left:21px;top:308px" width="16" height="14" viewBox="0 0 16 14"><path d="M1 3.500 Q1 2 2.500 2 H6 L8 4 H14 Q15 4 15 5 V13 H1Z" fill="#E9C55A" stroke="#B08424" stroke-width="1"/><path d="M1.500 6 H14.500 V12.500 H1.500Z" fill="#FBE48E"/><path d="M4 8 H12 V11 H4Z" fill="#F7D768"/><path d="M1 13 H15.500 V5.500" stroke="#8C6A1C" stroke-width="1" fill="none"/></svg>
<div class="t blue" style="left:41px;top:310px;letter-spacing:-0.12px">HYPR_simulator_June_27_</div>
<svg style="left:21px;top:325px" width="16" height="14" viewBox="0 0 16 14"><path d="M1 3.500 Q1 2 2.500 2 H6 L8 4 H14 Q15 4 15 5 V13 H1Z" fill="#E9C55A" stroke="#B08424" stroke-width="1"/><path d="M1.500 6 H14.500 V12.500 H1.500Z" fill="#FBE48E"/><path d="M4 8 H12 V11 H4Z" fill="#F7D768"/><path d="M1 13 H15.500 V5.500" stroke="#8C6A1C" stroke-width="1" fill="none"/></svg>
<div class="t blue" style="left:41px;top:327px;letter-spacing:-0.12px">HYPR_simulator_June_30_</div>
<svg style="left:21px;top:342px" width="16" height="14" viewBox="0 0 16 14"><path d="M1 3.500 Q1 2 2.500 2 H6 L8 4 H14 Q15 4 15 5 V13 H1Z" fill="#E9C55A" stroke="#B08424" stroke-width="1"/><path d="M1.500 6 H14.500 V12.500 H1.500Z" fill="#FBE48E"/><path d="M4 8 H12 V11 H4Z" fill="#F7D768"/><path d="M1 13 H15.500 V5.500" stroke="#8C6A1C" stroke-width="1" fill="none"/></svg>
<div class="t blue" style="left:41px;top:344px;letter-spacing:-0.12px">index_files</div>
<svg style="left:21px;top:359px" width="16" height="14" viewBox="0 0 16 14"><path d="M1 3.500 Q1 2 2.500 2 H6 L8 4 H14 Q15 4 15 5 V13 H1Z" fill="#E9C55A" stroke="#B08424" stroke-width="1"/><path d="M1.500 6 H14.500 V12.500 H1.500Z" fill="#FBE48E"/><path d="M4 8 H12 V11 H4Z" fill="#F7D768"/><path d="M1 13 H15.500 V5.500" stroke="#8C6A1C" stroke-width="1" fill="none"/></svg>
<svg style="left:6px;top:362px" width="9" height="9" viewBox="0 0 9 9"><rect x="0.500" y="0.500" width="8" height="8" fill="#fff" stroke="#808080"/><path d="M2.500 4.500 H6.500" stroke="#000"/><path d="M4.500 2.500 V6.500" stroke="#000"/></svg>
<div class="t blue" style="left:41px;top:361px;letter-spacing:-0.12px">mri_train</div>
<svg style="left:21px;top:376px" width="16" height="14" viewBox="0 0 16 14"><path d="M1 3.500 Q1 2 2.500 2 H6 L8 4 H14 Q15 4 15 5 V13 H1Z" fill="#E9C55A" stroke="#B08424" stroke-width="1"/><path d="M1.500 6 H14.500 V12.500 H1.500Z" fill="#FBE48E"/><path d="M4 8 H12 V11 H4Z" fill="#F7D768"/><path d="M1 13 H15.500 V5.500" stroke="#8C6A1C" stroke-width="1" fill="none"/></svg>
<div class="t blue" style="left:41px;top:378px;letter-spacing:-0.12px">pjb_paperclip_phantom</div>
<svg style="left:21px;top:393px" width="16" height="14" viewBox="0 0 16 14"><path d="M1 3.500 Q1 2 2.500 2 H6 L8 4 H14 Q15 4 15 5 V13 H1Z" fill="#E9C55A" stroke="#B08424" stroke-width="1"/><path d="M1.500 6 H14.500 V12.500 H1.500Z" fill="#FBE48E"/><path d="M4 8 H12 V11 H4Z" fill="#F7D768"/><path d="M1 13 H15.500 V5.500" stroke="#8C6A1C" stroke-width="1" fill="none"/></svg>
<svg style="left:6px;top:396px" width="9" height="9" viewBox="0 0 9 9"><rect x="0.500" y="0.500" width="8" height="8" fill="#fff" stroke="#808080"/><path d="M2.500 4.500 H6.500" stroke="#000"/></svg>
<div class="t blue" style="left:41px;top:395px;letter-spacing:-0.12px">screen_shots</div>
<svg style="left:40px;top:410px" width="17" height="14" viewBox="0 0 17 14"><path d="M1 3.500 Q1 2 2.500 2 H6 L8 4 H13 V13 H1Z" fill="#E3BC4C" stroke="#B8902C"/><path d="M3.500 6.500 H16.500 L13.500 13 H1Z" fill="#F9E38C" stroke="#B8902C" stroke-width=".9"/></svg>
<svg style="left:25px;top:413px" width="9" height="9" viewBox="0 0 9 9"><rect x="0.500" y="0.500" width="8" height="8" fill="#fff" stroke="#808080"/><path d="M2.500 4.500 H6.500" stroke="#000"/></svg>
<div class="a" style="left:58px;top:410px;width:71px;height:17px;background:#E7E7D8"></div>
<div class="t blue" style="left:60px;top:412px;letter-spacing:0.1px">ANIMATIONS</div>
<svg style="left:59px;top:427px" width="16" height="14" viewBox="0 0 16 14"><path d="M1 3.500 Q1 2 2.500 2 H6 L8 4 H14 Q15 4 15 5 V13 H1Z" fill="#E9C55A" stroke="#B08424" stroke-width="1"/><path d="M1.500 6 H14.500 V12.500 H1.500Z" fill="#FBE48E"/><path d="M4 8 H12 V11 H4Z" fill="#F7D768"/><path d="M1 13 H15.500 V5.500" stroke="#8C6A1C" stroke-width="1" fill="none"/></svg>
<div class="t blue" style="left:79px;top:429px;letter-spacing:-0.12px">log_files</div>
<svg style="left:21px;top:444px" width="16" height="14" viewBox="0 0 16 14"><path d="M1 3.500 Q1 2 2.500 2 H6 L8 4 H14 Q15 4 15 5 V13 H1Z" fill="#E9C55A" stroke="#B08424" stroke-width="1"/><path d="M1.500 6 H14.500 V12.500 H1.500Z" fill="#FBE48E"/><path d="M4 8 H12 V11 H4Z" fill="#F7D768"/><path d="M1 13 H15.500 V5.500" stroke="#8C6A1C" stroke-width="1" fill="none"/></svg>
<svg style="left:6px;top:447px" width="9" height="9" viewBox="0 0 9 9"><rect x="0.500" y="0.500" width="8" height="8" fill="#fff" stroke="#808080"/><path d="M2.500 4.500 H6.500" stroke="#000"/><path d="M4.500 2.500 V6.500" stroke="#000"/></svg>
<div class="t blue" style="left:41px;top:446px;letter-spacing:-0.12px">tabbed_example</div>
</div>
<div class="a" style="left:168px;top:187px;width:13px;height:14px;background:linear-gradient(90deg,#CAD6F6,#BCCCF4);border-radius:1px;box-shadow:1px 1px 0 #F8F8F6,2px 2px 0 #B8C8EE"><svg style="left:2.0px;top:3.0px" width="9" height="8" viewBox="0 0 9 8"><path d="M1 5.500 L4.500 2 L8 5.500" fill="none" stroke="#4D6185" stroke-width="2"/></svg></div>
<div class="a" style="left:168px;top:624px;width:13px;height:14px;background:linear-gradient(90deg,#CAD6F6,#BCCCF4);border-radius:1px;box-shadow:1px 1px 0 #F8F8F6,2px 2px 0 #B8C8EE"><svg style="left:2.0px;top:3.0px" width="9" height="8" viewBox="0 0 9 8"><path d="M1 2 L4.500 5.500 L8 2" fill="none" stroke="#4D6185" stroke-width="2"/></svg></div>
<div class="a" style="left:168px;top:451px;width:13px;height:28px;background:linear-gradient(90deg,#C8D4F4 0,#C8D4F4 55%,#B8C8F2 56%);border-radius:1px;box-shadow:1px 1px 0 #F8F8F6,2px 2px 0 #B0C4EC"><div class="a" style="left:3px;top:10px;width:6px;height:1px;background:#EEF4FE;box-shadow:0 2px 0 #EEF4FE,0 4px 0 #EEF4FE,0 6px 0 #EEF4FE"></div></div>
<div class="a" style="left:18px;top:641px;width:80px;height:13px;background:linear-gradient(#C8D4F4 0,#C8D4F4 55%,#B8C8F2 56%);border-radius:1px;box-shadow:1px 1px 0 #F8F8F6,2px 2px 0 #B0C4EC"><div class="a" style="left:36px;top:3px;width:1px;height:6px;background:#EEF4FE;box-shadow:2px 0 0 #EEF4FE,4px 0 0 #EEF4FE,6px 0 0 #EEF4FE"></div></div>
<div class="a" style="left:150px;top:641px;width:13px;height:13px;background:linear-gradient(90deg,#CAD6F6,#BCCCF4);border-radius:1px;box-shadow:1px 1px 0 #F8F8F6,2px 2px 0 #B8C8EE"><svg style="left:2.0px;top:2.5px" width="9" height="8" viewBox="0 0 9 8"><path d="M2 1 L5.500 4.500 L2 8" fill="none" stroke="#4D6185" stroke-width="2"/></svg></div>
<div class="a" style="left:167px;top:640px;width:17px;height:16px;background:#E7E7D8"></div>
<div class="a" style="left:187px;top:164px;width:632px;height:16px;background:#E7E7D8"></div>
<div class="a" style="left:187px;top:180px;width:632px;height:2px;background:#CDC6B2"></div>
<div class="a" style="left:436px;top:165px;width:1px;height:14px;background:#C8C0AC"></div>
<div class="a" style="left:437px;top:165px;width:3px;height:15px;background:#F5F5F3"></div>
<div class="a" style="left:554px;top:165px;width:1px;height:14px;background:#C8C0AC"></div>
<div class="a" style="left:555px;top:165px;width:3px;height:15px;background:#F5F5F3"></div>
<div class="a" style="left:652px;top:165px;width:1px;height:14px;background:#C8C0AC"></div>
<div class="a" style="left:653px;top:165px;width:3px;height:15px;background:#F5F5F3"></div>
<div class="a" style="left:770px;top:165px;width:1px;height:14px;background:#C8C0AC"></div>
<div class="a" style="left:771px;top:165px;width:3px;height:15px;background:#F5F5F3"></div>
<div class="t " style="left:195px;top:166px;">Name</div>
<div class="t " style="left:446px;top:166px;letter-spacing:-0.23px">Date Modified</div>
<div class="t " style="left:628px;top:166px;">Size</div>
<div class="t " style="left:665px;top:166px;">Type</div>
<svg style="left:698px;top:168px" width="10" height="6"><path d="M0 6 L5 0 L10 6Z" fill="#ACA899"/></svg>
<svg style="left:191px;top:182.5px" width="16" height="14" viewBox="0 0 16 14"><path d="M1 3.500 Q1 2 2.500 2 H6 L8 4 H14 Q15 4 15 5 V13 H1Z" fill="#E9C55A" stroke="#B08424" stroke-width="1"/><path d="M1.500 6 H14.500 V12.500 H1.500Z" fill="#FBE48E"/><path d="M4 8 H12 V11 H4Z" fill="#F7D768"/><path d="M1 13 H15.500 V5.500" stroke="#8C6A1C" stroke-width="1" fill="none"/></svg>
<div class="t blue" style="left:208px;top:185px;">log_files</div>
<div class="t blue" style="left:443px;top:185px;letter-spacing:-0.05px">7/1/2008 6:45 PM</div>
<div class="t blue" style="left:659px;top:185px;">File Folder</div>
<svg style="left:191px;top:200px" width="16" height="16" viewBox="0 0 16 16"><g><path d="M3.500 1.500 H12.500 L15.500 4.500 V15.500 H3.500Z" fill="#fff" stroke="#4C68A0" stroke-width=".9"/><path d="M5 9 H13.500 M5 11 H13.500 M5 13 H13.500" stroke="#9CB4DC" stroke-width="1"/><rect x="0.500" y="0.500" width="9.500" height="9.500" fill="#E4ECFA" stroke="#1E3C90"/><path d="M2 2.800 L3.600 7.800 L5.200 4 L6.800 7.800 L8.600 2.800" fill="none" stroke="#142C78" stroke-width="1.600"/></g></svg>
<svg style="left:197.5px;top:205.5px" width="8" height="8" viewBox="0 0 8 8"><circle cx="4" cy="4" r="3.400" fill="#3C8CD0"/><path d="M2 2.500 q2 -1.500 3.500 0 q0 2.500 -1.500 3.500 q-2 -1 -2 -3.500z" fill="#48B068"/></svg>
<div class="t blue" style="left:208px;top:202px;">index.htm</div>
<div class="t blue" style="left:443px;top:202px;letter-spacing:-0.05px">7/1/2008 5:28 PM</div>
<div class="t blue" style="left:560px;width:88px;text-align:right;top:202px">37 KB</div>
<div class="t blue" style="left:659px;top:202px;">Firefox Document</div>
<svg style="left:191px;top:217px" width="16" height="16" viewBox="0 0 16 16"><g opacity=".35"><path d="M3.500 1.500 H12.500 L15.500 4.500 V15.500 H3.500Z" fill="#fff" stroke="#4C68A0" stroke-width=".9"/><path d="M5 9 H13.500 M5 11 H13.500 M5 13 H13.500" stroke="#9CB4DC" stroke-width="1"/><rect x="0.500" y="0.500" width="9.500" height="9.500" fill="#E4ECFA" stroke="#1E3C90"/><path d="M2 2.800 L3.600 7.800 L5.200 4 L6.800 7.800 L8.600 2.800" fill="none" stroke="#142C78" stroke-width="1.600"/></g></svg>
<div class="t blue" style="left:208px;top:219px;">~$index.doc</div>
<div class="t blue" style="left:443px;top:219px;letter-spacing:-0.05px">7/1/2008 5:29 PM</div>
<div class="t blue" style="left:560px;width:88px;text-align:right;top:219px">1 KB</div>
<div class="t blue" style="left:659px;top:219px;">Microsoft Word Doc...</div>
<svg style="left:191px;top:234px" width="16" height="16" viewBox="0 0 16 16"><g><path d="M3.500 1.500 H12.500 L15.500 4.500 V15.500 H3.500Z" fill="#fff" stroke="#4C68A0" stroke-width=".9"/><path d="M5 9 H13.500 M5 11 H13.500 M5 13 H13.500" stroke="#9CB4DC" stroke-width="1"/><rect x="0.500" y="0.500" width="9.500" height="9.500" fill="#E4ECFA" stroke="#1E3C90"/><path d="M2 2.800 L3.600 7.800 L5.200 4 L6.800 7.800 L8.600 2.800" fill="none" stroke="#142C78" stroke-width="1.600"/></g></svg>
<div class="t blue" style="left:208px;top:236px;">index.doc</div>
<div class="t blue" style="left:443px;top:236px;letter-spacing:-0.05px">7/1/2008 8:24 PM</div>
<div class="t blue" style="left:560px;width:88px;text-align:right;top:236px">56 KB</div>
<div class="t blue" style="left:659px;top:236px;">Microsoft Word Doc...</div>
<svg style="left:191px;top:251px" width="16" height="16" viewBox="0 0 16 16"><path d="M1.500 0.500 H11 L14.500 4 V15.500 H1.500Z" fill="#FBFBF8" stroke="#C8C8B8" stroke-width="1"/><path d="M11 0.500 V4 H14.500" fill="#EDEDE4" stroke="#C8C8B8" stroke-width=".8"/><rect x="3.500" y="4.500" width="8.500" height="7.500" fill="#fff" stroke="#808898" stroke-width=".9"/><rect x="3.500" y="4.500" width="8.500" height="2" fill="#5A70D0"/><rect x="4" y="4.700" width="1.300" height="1.300" fill="#F0E040"/><path d="M7 8 L5 9.500 L7 11Z" fill="#D83030"/><circle cx="9.500" cy="9.500" r="1.300" fill="#38B0D8"/></svg>
<div class="t blue" style="left:208px;top:253px;">~WRL0030.tmp</div>
<div class="t blue" style="left:443px;top:253px;letter-spacing:-0.05px">7/1/2008 5:28 PM</div>
<div class="t blue" style="left:560px;width:88px;text-align:right;top:253px">48 KB</div>
<div class="t blue" style="left:659px;top:253px;">TMP File</div>
<svg style="left:191px;top:268px" width="16" height="16" viewBox="0 0 16 16"><path d="M1.500 0.500 H11 L14.500 4 V15.500 H1.500Z" fill="#FBFBF8" stroke="#C8C8B8" stroke-width="1"/><path d="M11 0.500 V4 H14.500" fill="#EDEDE4" stroke="#C8C8B8" stroke-width=".8"/><rect x="3.500" y="4.500" width="8.500" height="7.500" fill="#fff" stroke="#808898" stroke-width=".9"/><rect x="3.500" y="4.500" width="8.500" height="2" fill="#5A70D0"/><rect x="4" y="4.700" width="1.300" height="1.300" fill="#F0E040"/><path d="M7 8 L5 9.500 L7 11Z" fill="#D83030"/><circle cx="9.500" cy="9.500" r="1.300" fill="#38B0D8"/></svg>
<div class="t blue" style="left:208px;top:270px;">~WRL0946.tmp</div>
<div class="t blue" style="left:443px;top:270px;letter-spacing:-0.05px">7/1/2008 5:30 PM</div>
<div class="t blue" style="left:560px;width:88px;text-align:right;top:270px">48 KB</div>
<div class="t blue" style="left:659px;top:270px;">TMP File</div>
<svg style="left:191px;top:285px" width="16" height="16" viewBox="0 0 16 16"><path d="M1.500 0.500 H11 L14.500 4 V15.500 H1.500Z" fill="#FBFBF8" stroke="#C8C8B8" stroke-width="1"/><path d="M11 0.500 V4 H14.500" fill="#EDEDE4" stroke="#C8C8B8" stroke-width=".8"/><rect x="3.500" y="4.500" width="8.500" height="7.500" fill="#fff" stroke="#808898" stroke-width=".9"/><rect x="3.500" y="4.500" width="8.500" height="2" fill="#5A70D0"/><rect x="4" y="4.700" width="1.300" height="1.300" fill="#F0E040"/><path d="M7 8 L5 9.500 L7 11Z" fill="#D83030"/><circle cx="9.500" cy="9.500" r="1.300" fill="#38B0D8"/></svg>
<div class="t blue" style="left:208px;top:287px;">~WRL0966.tmp</div>
<div class="t blue" style="left:443px;top:287px;letter-spacing:-0.05px">7/1/2008 5:54 PM</div>
<div class="t blue" style="left:560px;width:88px;text-align:right;top:287px">53 KB</div>
<div class="t blue" style="left:659px;top:287px;">TMP File</div>
<svg style="left:191px;top:302px" width="16" height="16" viewBox="0 0 16 16"><path d="M1.500 0.500 H11 L14.500 4 V15.500 H1.500Z" fill="#FBFBF8" stroke="#C8C8B8" stroke-width="1"/><path d="M11 0.500 V4 H14.500" fill="#EDEDE4" stroke="#C8C8B8" stroke-width=".8"/><rect x="3.500" y="4.500" width="8.500" height="7.500" fill="#fff" stroke="#808898" stroke-width=".9"/><rect x="3.500" y="4.500" width="8.500" height="2" fill="#5A70D0"/><rect x="4" y="4.700" width="1.300" height="1.300" fill="#F0E040"/><path d="M7 8 L5 9.500 L7 11Z" fill="#D83030"/><circle cx="9.500" cy="9.500" r="1.300" fill="#38B0D8"/></svg>
<div class="t blue" style="left:208px;top:304px;">~WRL1074.tmp</div>
<div class="t blue" style="left:443px;top:304px;letter-spacing:-0.05px">7/1/2008 6:19 PM</div>
<div class="t blue" style="left:560px;width:88px;text-align:right;top:304px">61 KB</div>
<div class="t blue" style="left:659px;top:304px;">TMP File</div>
<svg style="left:191px;top:319px" width="16" height="16" viewBox="0 0 16 16"><path d="M1.500 0.500 H11 L14.500 4 V15.500 H1.500Z" fill="#FBFBF8" stroke="#C8C8B8" stroke-width="1"/><path d="M11 0.500 V4 H14.500" fill="#EDEDE4" stroke="#C8C8B8" stroke-width=".8"/><rect x="3.500" y="4.500" width="8.500" height="7.500" fill="#fff" stroke="#808898" stroke-width=".9"/><rect x="3.500" y="4.500" width="8.500" height="2" fill="#5A70D0"/><rect x="4" y="4.700" width="1.300" height="1.300" fill="#F0E040"/><path d="M7 8 L5 9.500 L7 11Z" fill="#D83030"/><circle cx="9.500" cy="9.500" r="1.300" fill="#38B0D8"/></svg>
<div class="t blue" style="left:208px;top:321px;">~WRL1188.tmp</div>
<div class="t blue" style="left:443px;top:321px;letter-spacing:-0.05px">7/1/2008 6:28 PM</div>
<div class="t blue" style="left:560px;width:88px;text-align:right;top:321px">64 KB</div>
<div class="t blue" style="left:659px;top:321px;">TMP File</div>
<svg style="left:191px;top:336px" width="16" height="16" viewBox="0 0 16 16"><path d="M1.500 0.500 H11 L14.500 4 V15.500 H1.500Z" fill="#FBFBF8" stroke="#C8C8B8" stroke-width="1"/><path d="M11 0.500 V4 H14.500" fill="#EDEDE4" stroke="#C8C8B8" stroke-width=".8"/><rect x="3.500" y="4.500" width="8.500" height="7.500" fill="#fff" stroke="#808898" stroke-width=".9"/><rect x="3.500" y="4.500" width="8.500" height="2" fill="#5A70D0"/><rect x="4" y="4.700" width="1.300" height="1.300" fill="#F0E040"/><path d="M7 8 L5 9.500 L7 11Z" fill="#D83030"/><circle cx="9.500" cy="9.500" r="1.300" fill="#38B0D8"/></svg>
<div class="t blue" style="left:208px;top:338px;">~WRL1652.tmp</div>
<div class="t blue" style="left:443px;top:338px;letter-spacing:-0.05px">7/1/2008 6:45 PM</div>
<div class="t blue" style="left:560px;width:88px;text-align:right;top:338px">66 KB</div>
<div class="t blue" style="left:659px;top:338px;">TMP File</div>
<svg style="left:191px;top:353px" width="16" height="16" viewBox="0 0 16 16"><path d="M1.500 0.500 H11 L14.500 4 V15.500 H1.500Z" fill="#FBFBF8" stroke="#C8C8B8" stroke-width="1"/><path d="M11 0.500 V4 H14.500" fill="#EDEDE4" stroke="#C8C8B8" stroke-width=".8"/><rect x="3.500" y="4.500" width="8.500" height="7.500" fill="#fff" stroke="#808898" stroke-width=".9"/><rect x="3.500" y="4.500" width="8.500" height="2" fill="#5A70D0"/><rect x="4" y="4.700" width="1.300" height="1.300" fill="#F0E040"/><path d="M7 8 L5 9.500 L7 11Z" fill="#D83030"/><circle cx="9.500" cy="9.500" r="1.300" fill="#38B0D8"/></svg>
<div class="t blue" style="left:208px;top:355px;">~WRL1683.tmp</div>
<div class="t blue" style="left:443px;top:355px;letter-spacing:-0.05px">7/1/2008 6:04 PM</div>
<div class="t blue" style="left:560px;width:88px;text-align:right;top:355px">54 KB</div>
<div class="t blue" style="left:659px;top:355px;">TMP File</div>
<svg style="left:191px;top:370px" width="16" height="16" viewBox="0 0 16 16"><path d="M1.500 0.500 H11 L14.500 4 V15.500 H1.500Z" fill="#FBFBF8" stroke="#C8C8B8" stroke-width="1"/><path d="M11 0.500 V4 H14.500" fill="#EDEDE4" stroke="#C8C8B8" stroke-width=".8"/><rect x="3.500" y="4.500" width="8.500" height="7.500" fill="#fff" stroke="#808898" stroke-width=".9"/><rect x="3.500" y="4.500" width="8.500" height="2" fill="#5A70D0"/><rect x="4" y="4.700" width="1.300" height="1.300" fill="#F0E040"/><path d="M7 8 L5 9.500 L7 11Z" fill="#D83030"/><circle cx="9.500" cy="9.500" r="1.300" fill="#38B0D8"/></svg>
<div class="t blue" style="left:208px;top:372px;">~WRL2063.tmp</div>
<div class="t blue" style="left:443px;top:372px;letter-spacing:-0.05px">7/1/2008 6:23 PM</div>
<div class="t blue" style="left:560px;width:88px;text-align:right;top:372px">61 KB</div>
<div class="t blue" style="left:659px;top:372px;">TMP File</div>
<svg style="left:191px;top:387px" width="16" height="16" viewBox="0 0 16 16"><path d="M1.500 0.500 H11 L14.500 4 V15.500 H1.500Z" fill="#FBFBF8" stroke="#C8C8B8" stroke-width="1"/><path d="M11 0.500 V4 H14.500" fill="#EDEDE4" stroke="#C8C8B8" stroke-width=".8"/><rect x="3.500" y="4.500" width="8.500" height="7.500" fill="#fff" stroke="#808898" stroke-width=".9"/><rect x="3.500" y="4.500" width="8.500" height="2" fill="#5A70D0"/><rect x="4" y="4.700" width="1.300" height="1.300" fill="#F0E040"/><path d="M7 8 L5 9.500 L7 11Z" fill="#D83030"/><circle cx="9.500" cy="9.500" r="1.300" fill="#38B0D8"/></svg>
<div class="t blue" style="left:208px;top:389px;">~WRL3065.tmp</div>
<div class="t blue" style="left:443px;top:389px;letter-spacing:-0.05px">7/1/2008 6:38 PM</div>
<div class="t blue" style="left:560px;width:88px;text-align:right;top:389px">64 KB</div>
<div class="t blue" style="left:659px;top:389px;">TMP File</div>
<svg style="left:191px;top:404px" width="16" height="16" viewBox="0 0 16 16"><path d="M1.500 0.500 H11 L14.500 4 V15.500 H1.500Z" fill="#FBFBF8" stroke="#C8C8B8" stroke-width="1"/><path d="M11 0.500 V4 H14.500" fill="#EDEDE4" stroke="#C8C8B8" stroke-width=".8"/><rect x="3.500" y="4.500" width="8.500" height="7.500" fill="#fff" stroke="#808898" stroke-width=".9"/><rect x="3.500" y="4.500" width="8.500" height="2" fill="#5A70D0"/><rect x="4" y="4.700" width="1.300" height="1.300" fill="#F0E040"/><path d="M7 8 L5 9.500 L7 11Z" fill="#D83030"/><circle cx="9.500" cy="9.500" r="1.300" fill="#38B0D8"/></svg>
<div class="t blue" style="left:208px;top:406px;">~WRL3645.tmp</div>
<div class="t blue" style="left:443px;top:406px;letter-spacing:-0.05px">7/1/2008 6:24 PM</div>
<div class="t blue" style="left:560px;width:88px;text-align:right;top:406px">64 KB</div>
<div class="t blue" style="left:659px;top:406px;">TMP File</div>
<svg style="left:191px;top:421px" width="16" height="16" viewBox="0 0 16 16"><path d="M1.500 0.500 H11 L14.500 4 V15.500 H1.500Z" fill="#FBFBF8" stroke="#C8C8B8" stroke-width="1"/><path d="M11 0.500 V4 H14.500" fill="#EDEDE4" stroke="#C8C8B8" stroke-width=".8"/><rect x="3.500" y="4.500" width="8.500" height="7.500" fill="#fff" stroke="#808898" stroke-width=".9"/><rect x="3.500" y="4.500" width="8.500" height="2" fill="#5A70D0"/><rect x="4" y="4.700" width="1.300" height="1.300" fill="#F0E040"/><path d="M7 8 L5 9.500 L7 11Z" fill="#D83030"/><circle cx="9.500" cy="9.500" r="1.300" fill="#38B0D8"/></svg>
<div class="t blue" style="left:208px;top:423px;">~WRL3819.tmp</div>
<div class="t blue" style="left:443px;top:423px;letter-spacing:-0.05px">7/1/2008 6:39 PM</div>
<div class="t blue" style="left:560px;width:88px;text-align:right;top:423px">64 KB</div>
<div class="t blue" style="left:659px;top:423px;">TMP File</div>
<svg style="left:191px;top:438px" width="16" height="16" viewBox="0 0 16 16"><path d="M1.500 0.500 H11 L14.500 4 V15.500 H1.500Z" fill="#FBFBF8" stroke="#C8C8B8" stroke-width="1"/><path d="M11 0.500 V4 H14.500" fill="#EDEDE4" stroke="#C8C8B8" stroke-width=".8"/><rect x="3.500" y="4.500" width="8.500" height="7.500" fill="#fff" stroke="#808898" stroke-width=".9"/><rect x="3.500" y="4.500" width="8.500" height="2" fill="#5A70D0"/><rect x="4" y="4.700" width="1.300" height="1.300" fill="#F0E040"/><path d="M7 8 L5 9.500 L7 11Z" fill="#D83030"/><circle cx="9.500" cy="9.500" r="1.300" fill="#38B0D8"/></svg>
<div class="t blue" style="left:208px;top:440px;">~WRL3896.tmp</div>
<div class="t blue" style="left:443px;top:440px;letter-spacing:-0.05px">7/1/2008 6:04 PM</div>
<div class="t blue" style="left:560px;width:88px;text-align:right;top:440px">54 KB</div>
<div class="t blue" style="left:659px;top:440px;">TMP File</div>
<svg style="left:191px;top:455px" width="16" height="16" viewBox="0 0 16 16"><path d="M2.500 0.500 H11 L14.500 4 V14.500 H2.500Z" fill="#FBFBF8" stroke="#B8B8B0" stroke-width="1"/><path d="M11 0.500 V4 H14.500" fill="#EDEDE4" stroke="#B8B8B0" stroke-width=".8"/><path d="M2.500 2 V14.500 H14" fill="none" stroke="#6C6C6C" stroke-width="1"/><rect x="4" y="3" width="9" height="9.500" fill="#4A5464"/><rect x="6.300" y="4" width="4.400" height="3" fill="#38C0E8"/><rect x="6.300" y="8.500" width="4.400" height="3" fill="#3088E0"/><path d="M6 7.700 h5" stroke="#C04060" stroke-width="1"/><path d="M4.900 3.500 V12.500 M12.100 3.500 V12.500" stroke="#FFFFFF" stroke-width="1.200" stroke-dasharray="1.300 1"/></svg>
<div class="t blue" style="left:208px;top:457px;">HYPR_no_noise.avi</div>
<div class="t blue" style="left:443px;top:457px;letter-spacing:-0.05px">7/1/2008 8:28 PM</div>
<div class="t blue" style="left:560px;width:88px;text-align:right;top:457px">20,676 KB</div>
<div class="t blue" style="left:659px;top:457px;">Video Clip</div>
<svg style="left:191px;top:472px" width="16" height="16" viewBox="0 0 16 16"><path d="M2.500 0.500 H11 L14.500 4 V14.500 H2.500Z" fill="#FBFBF8" stroke="#B8B8B0" stroke-width="1"/><path d="M11 0.500 V4 H14.500" fill="#EDEDE4" stroke="#B8B8B0" stroke-width=".8"/><path d="M2.500 2 V14.500 H14" fill="none" stroke="#6C6C6C" stroke-width="1"/><rect x="4" y="3" width="9" height="9.500" fill="#4A5464"/><rect x="6.300" y="4" width="4.400" height="3" fill="#38C0E8"/><rect x="6.300" y="8.500" width="4.400" height="3" fill="#3088E0"/><path d="M6 7.700 h5" stroke="#C04060" stroke-width="1"/><path d="M4.900 3.500 V12.500 M12.100 3.500 V12.500" stroke="#FFFFFF" stroke-width="1.200" stroke-dasharray="1.300 1"/></svg>
<div class="t blue" style="left:208px;top:474px;">I_HYPR_no_noise.avi</div>
<div class="t blue" style="left:443px;top:474px;letter-spacing:-0.05px">7/1/2008 8:12 PM</div>
<div class="t blue" style="left:560px;width:88px;text-align:right;top:474px">80,525 KB</div>
<div class="t blue" style="left:659px;top:474px;">Video Clip</div>
<svg style="left:191px;top:489px" width="16" height="16" viewBox="0 0 16 16"><path d="M2.500 0.500 H11 L14.500 4 V14.500 H2.500Z" fill="#FBFBF8" stroke="#B8B8B0" stroke-width="1"/><path d="M11 0.500 V4 H14.500" fill="#EDEDE4" stroke="#B8B8B0" stroke-width=".8"/><path d="M2.500 2 V14.500 H14" fill="none" stroke="#6C6C6C" stroke-width="1"/><rect x="4" y="3" width="9" height="9.500" fill="#4A5464"/><rect x="6.300" y="4" width="4.400" height="3" fill="#38C0E8"/><rect x="6.300" y="8.500" width="4.400" height="3" fill="#3088E0"/><path d="M6 7.700 h5" stroke="#C04060" stroke-width="1"/><path d="M4.900 3.500 V12.500 M12.100 3.500 V12.500" stroke="#FFFFFF" stroke-width="1.200" stroke-dasharray="1.300 1"/></svg>
<div class="t blue" style="left:208px;top:491px;">IHYPR_with_noise.avi</div>
<div class="t blue" style="left:443px;top:491px;letter-spacing:-0.05px">7/1/2008 8:05 PM</div>
<div class="t blue" style="left:560px;width:88px;text-align:right;top:491px">80,525 KB</div>
<div class="t blue" style="left:659px;top:491px;">Video Clip</div>
<svg style="left:191px;top:506px" width="16" height="16" viewBox="0 0 16 16"><path d="M2.500 0.500 H11 L14.500 4 V14.500 H2.500Z" fill="#FBFBF8" stroke="#B8B8B0" stroke-width="1"/><path d="M11 0.500 V4 H14.500" fill="#EDEDE4" stroke="#B8B8B0" stroke-width=".8"/><path d="M2.500 2 V14.500 H14" fill="none" stroke="#6C6C6C" stroke-width="1"/><rect x="4" y="3" width="9" height="9.500" fill="#4A5464"/><rect x="6.300" y="4" width="4.400" height="3" fill="#38C0E8"/><rect x="6.300" y="8.500" width="4.400" height="3" fill="#3088E0"/><path d="M6 7.700 h5" stroke="#C04060" stroke-width="1"/><path d="M4.900 3.500 V12.500 M12.100 3.500 V12.500" stroke="#FFFFFF" stroke-width="1.200" stroke-dasharray="1.300 1"/></svg>
<div class="t blue" style="left:208px;top:508px;">IW_HYPR_no_noise.avi</div>
<div class="t blue" style="left:443px;top:508px;letter-spacing:-0.05px">7/1/2008 8:14 PM</div>
<div class="t blue" style="left:560px;width:88px;text-align:right;top:508px">80,525 KB</div>
<div class="t blue" style="left:659px;top:508px;">Video Clip</div>
<svg style="left:191px;top:523px" width="16" height="16" viewBox="0 0 16 16"><path d="M2.500 0.500 H11 L14.500 4 V14.500 H2.500Z" fill="#FBFBF8" stroke="#B8B8B0" stroke-width="1"/><path d="M11 0.500 V4 H14.500" fill="#EDEDE4" stroke="#B8B8B0" stroke-width=".8"/><path d="M2.500 2 V14.500 H14" fill="none" stroke="#6C6C6C" stroke-width="1"/><rect x="4" y="3" width="9" height="9.500" fill="#4A5464"/><rect x="6.300" y="4" width="4.400" height="3" fill="#38C0E8"/><rect x="6.300" y="8.500" width="4.400" height="3" fill="#3088E0"/><path d="M6 7.700 h5" stroke="#C04060" stroke-width="1"/><path d="M4.900 3.500 V12.500 M12.100 3.500 V12.500" stroke="#FFFFFF" stroke-width="1.200" stroke-dasharray="1.300 1"/></svg>
<div class="t blue" style="left:208px;top:525px;">IW_HYPR_with_noise.avi</div>
<div class="t blue" style="left:443px;top:525px;letter-spacing:-0.05px">7/1/2008 8:08 PM</div>
<div class="t blue" style="left:560px;width:88px;text-align:right;top:525px">80,525 KB</div>
<div class="t blue" style="left:659px;top:525px;">Video Clip</div>
<svg style="left:191px;top:540px" width="16" height="16" viewBox="0 0 16 16"><path d="M2.500 0.500 H11 L14.500 4 V14.500 H2.500Z" fill="#FBFBF8" stroke="#B8B8B0" stroke-width="1"/><path d="M11 0.500 V4 H14.500" fill="#EDEDE4" stroke="#B8B8B0" stroke-width=".8"/><path d="M2.500 2 V14.500 H14" fill="none" stroke="#6C6C6C" stroke-width="1"/><rect x="4" y="3" width="9" height="9.500" fill="#4A5464"/><rect x="6.300" y="4" width="4.400" height="3" fill="#38C0E8"/><rect x="6.300" y="8.500" width="4.400" height="3" fill="#3088E0"/><path d="M6 7.700 h5" stroke="#C04060" stroke-width="1"/><path d="M4.900 3.500 V12.500 M12.100 3.500 V12.500" stroke="#FFFFFF" stroke-width="1.200" stroke-dasharray="1.300 1"/></svg>
<div class="t blue" style="left:208px;top:542px;">WHYPR_with_noise.avi</div>
<div class="t blue" style="left:443px;top:542px;letter-spacing:-0.05px">7/1/2008 6:32 PM</div>
<div class="t blue" style="left:560px;width:88px;text-align:right;top:542px">10,339 KB</div>
<div class="t blue" style="left:659px;top:542px;">Video Clip</div>
<svg style="left:191px;top:557px" width="16" height="16" viewBox="0 0 16 16"><path d="M1.500 0.500 H11 L14.500 4 V15.500 H1.500Z" fill="#FBFBF8" stroke="#C8C8B8" stroke-width="1"/><path d="M11 0.500 V4 H14.500" fill="#EDEDE4" stroke="#C8C8B8" stroke-width=".8"/><rect x="3.500" y="4.500" width="8.500" height="7.500" fill="#fff" stroke="#808898" stroke-width=".9"/><rect x="3.500" y="4.500" width="8.500" height="2" fill="#5A70D0"/><rect x="4" y="4.700" width="1.300" height="1.300" fill="#F0E040"/><path d="M7 8 L5 9.500 L7 11Z" fill="#D83030"/><circle cx="9.500" cy="9.500" r="1.300" fill="#38B0D8"/></svg>
<div class="t blue" style="left:208px;top:559px;">~WRL0827.tmp</div>
<div class="t blue" style="left:443px;top:559px;letter-spacing:-0.05px">7/1/2008 8:16 PM</div>
<div class="t blue" style="left:560px;width:88px;text-align:right;top:559px">56 KB</div>
<div class="t blue" style="left:659px;top:559px;">TMP File</div>
<svg style="left:191px;top:574px" width="16" height="16" viewBox="0 0 16 16"><path d="M1.500 0.500 H11 L14.500 4 V15.500 H1.500Z" fill="#FBFBF8" stroke="#5C78B8" stroke-width="1"/><path d="M11 0.500 V4 H14.500" fill="#EDEDE4" stroke="#5C78B8" stroke-width=".8"/><rect x="3" y="4" width="9" height="9" fill="#F4F8FF"/><circle cx="6" cy="6.500" r="2.300" fill="#E83020"/><rect x="6" y="7" width="4.500" height="4.500" fill="#2860E0"/><path d="M8 11.500 l3 -4 l1.500 4z" fill="#F0C020"/></svg>
<div class="t blue" style="left:208px;top:576px;">HYPR_no_noise.gif</div>
<div class="t blue" style="left:443px;top:576px;letter-spacing:-0.05px">7/1/2008 8:25 PM</div>
<div class="t blue" style="left:560px;width:88px;text-align:right;top:576px">2,850 KB</div>
<div class="t blue" style="left:659px;top:576px;">GIF Image</div>
<svg style="left:191px;top:591px" width="16" height="16" viewBox="0 0 16 16"><path d="M2.500 0.500 H11 L14.500 4 V14.500 H2.500Z" fill="#FBFBF8" stroke="#B8B8B0" stroke-width="1"/><path d="M11 0.500 V4 H14.500" fill="#EDEDE4" stroke="#B8B8B0" stroke-width=".8"/><path d="M2.500 2 V14.500 H14" fill="none" stroke="#6C6C6C" stroke-width="1"/><rect x="4" y="3" width="9" height="9.500" fill="#4A5464"/><rect x="6.300" y="4" width="4.400" height="3" fill="#38C0E8"/><rect x="6.300" y="8.500" width="4.400" height="3" fill="#3088E0"/><path d="M6 7.700 h5" stroke="#C04060" stroke-width="1"/><path d="M4.900 3.500 V12.500 M12.100 3.500 V12.500" stroke="#FFFFFF" stroke-width="1.200" stroke-dasharray="1.300 1"/></svg>
<div class="t blue" style="left:208px;top:593px;">HYPR_with_noise.avi</div>
<div class="t blue" style="left:443px;top:593px;letter-spacing:-0.05px">7/1/2008 8:31 PM</div>
<div class="t blue" style="left:560px;width:88px;text-align:right;top:593px">24,429 KB</div>
<div class="t blue" style="left:659px;top:593px;">Video Clip</div>
<svg style="left:191px;top:608px" width="16" height="16" viewBox="0 0 16 16"><path d="M2.500 0.500 H11 L14.500 4 V14.500 H2.500Z" fill="#FBFBF8" stroke="#B8B8B0" stroke-width="1"/><path d="M11 0.500 V4 H14.500" fill="#EDEDE4" stroke="#B8B8B0" stroke-width=".8"/><path d="M2.500 2 V14.500 H14" fill="none" stroke="#6C6C6C" stroke-width="1"/><rect x="4" y="3" width="9" height="9.500" fill="#4A5464"/><rect x="6.300" y="4" width="4.400" height="3" fill="#38C0E8"/><rect x="6.300" y="8.500" width="4.400" height="3" fill="#3088E0"/><path d="M6 7.700 h5" stroke="#C04060" stroke-width="1"/><path d="M4.900 3.500 V12.500 M12.100 3.500 V12.500" stroke="#FFFFFF" stroke-width="1.200" stroke-dasharray="1.300 1"/></svg>
<div class="t blue" style="left:208px;top:610px;">WHYPR_no_noise.avi</div>
<div class="t blue" style="left:443px;top:610px;letter-spacing:-0.05px">7/1/2008 8:33 PM</div>
<div class="t blue" style="left:560px;width:88px;text-align:right;top:610px">24,429 KB</div>
<div class="t blue" style="left:659px;top:610px;">Video Clip</div>
<div class="a" style="left:0px;top:656px;width:819px;height:1px;background:#A8A490"></div>
<div class="a" style="left:0px;top:657px;width:819px;height:22px;background:#E7E7D8"></div>
<div class="a" style="left:0px;top:657px;width:819px;height:1px;background:#F5F5F3"></div>
<div class="t " style="left:0px;top:663px;letter-spacing:-0.27px">(Disk free space: 268 GB)</div>
<div class="a" style="left:583px;top:660px;width:1px;height:17px;background:#C0BCA8"></div>
<div class="a" style="left:584px;top:660px;width:1px;height:17px;background:#F5F5F3"></div>
<div class="a" style="left:662px;top:660px;width:1px;height:17px;background:#C0BCA8"></div>
<div class="a" style="left:663px;top:660px;width:1px;height:17px;background:#F5F5F3"></div>
<div class="t " style="left:589px;top:663px;">396 MB</div>
<svg style="left:669px;top:660px" width="14" height="16" viewBox="0 0 14 16"><rect x="2" y="1" width="9" height="8" rx="1" fill="#4AA8F0" stroke="#2A60B0"/><rect x="5" y="2" width="7" height="8" fill="#C8D8F0" stroke="#7088B0" stroke-width=".8"/><path d="M3 11 H11 L12 14 H2Z" fill="#D8DCE8" stroke="#8090A8" stroke-width=".8"/></svg>
<div class="t " style="left:687px;top:663px;letter-spacing:-0.34px">My Computer</div>
<svg style="left:806px;top:666px" width="12" height="12" viewBox="0 0 12 12"><path d="M10 2 h2 v2 h-2z M6 6 h2 v2 h-2z M10 6 h2 v2 h-2z M2 10 h2 v2 h-2z M6 10 h2 v2 h-2z M10 10 h2 v2 h-2z" fill="#B8B4A0"/></svg>
<div class="a" style="left:0px;top:753px;width:429px;height:7px;background:linear-gradient(#3A8CF0 0,#0A5CE0 2px,#0450D8 7px);border-top-right-radius:3px"></div>
<div class="a" style="left:411px;top:758px;width:13px;height:4px;background:#E0603C;border:1px solid #fff;border-radius:2px"></div></div></body></html>
